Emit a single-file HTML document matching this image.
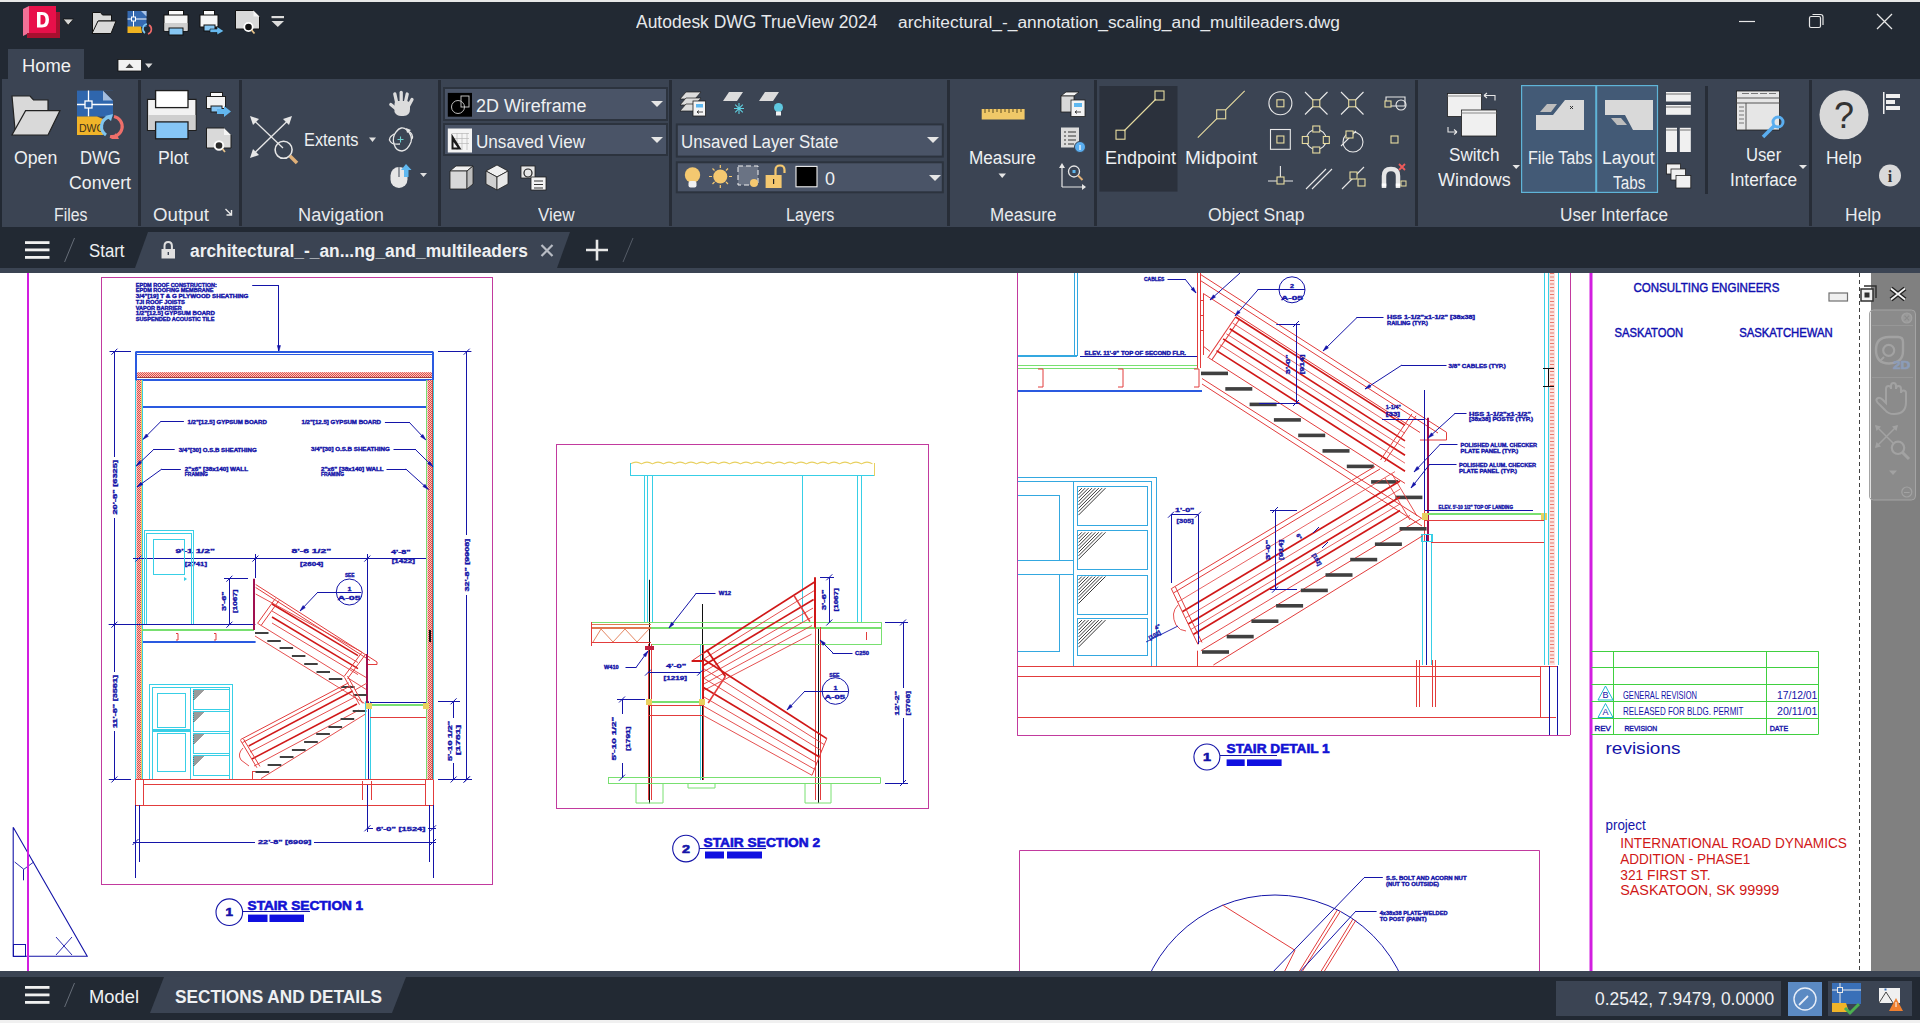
<!DOCTYPE html>
<html><head><meta charset="utf-8">
<style>
*{margin:0;padding:0;box-sizing:border-box}
html,body{width:1920px;height:1023px;overflow:hidden;background:#222933;font-family:"Liberation Sans",sans-serif;color:#eef0f2}
.a{position:absolute}
.t{position:absolute;white-space:nowrap;line-height:1}
.sep{position:absolute;width:3px;background:#272d37}
.lbl{position:absolute;white-space:nowrap;font-size:18px;line-height:1;color:#e8eaed;transform:translateX(-50%)}
svg{position:absolute;overflow:visible}
</style></head><body>
<!-- top white line -->
<div class="a" style="left:0;top:0;width:1920px;height:2px;background:#e8e8e8"></div>

<!-- ===== TITLE BAR ===== -->
<div class="t" style="left:636px;top:14px;font-size:17.5px;color:#e6e8eb;transform:scaleX(0.9984);transform-origin:0 0">Autodesk DWG TrueView 2024</div>
<div class="t" style="left:898px;top:14px;font-size:17.3px;color:#e6e8eb;transform:scaleX(1.0024);transform-origin:0 0">architectural_-_annotation_scaling_and_multileaders.dwg</div>

<!-- ===== RIBBON TAB ROW ===== -->
<div class="a" style="left:8px;top:49px;width:76px;height:31px;background:#3b4453"></div>
<div class="t" style="left:22.4px;top:57px;font-size:18px;color:#f2f2f2;transform:scaleX(1.0205);transform-origin:0 0">Home</div>

<!-- ===== RIBBON PANEL ===== -->
<div class="a" style="left:2px;top:79px;width:1918px;height:148px;background:#3b4453"></div>
<div class="sep" style="left:138px;top:80px;height:146px"></div>
<div class="sep" style="left:239px;top:80px;height:146px"></div>
<div class="sep" style="left:438px;top:80px;height:146px"></div>
<div class="sep" style="left:669px;top:80px;height:146px"></div>
<div class="sep" style="left:947px;top:80px;height:146px"></div>
<div class="sep" style="left:1094px;top:80px;height:146px"></div>
<div class="sep" style="left:1415px;top:80px;height:146px"></div>
<div class="sep" style="left:1705px;top:86px;height:108px"></div>
<div class="sep" style="left:1809px;top:80px;height:146px"></div>

<div class="t" style="left:54px;top:206px;font-size:18px;color:#e8eaed;transform:scaleX(0.8812);transform-origin:0 0">Files</div>
<div class="t" style="left:153.3px;top:206px;font-size:18px;color:#e8eaed;transform:scaleX(1.0361);transform-origin:0 0">Output</div>
<div class="t" style="left:298px;top:206px;font-size:18px;color:#e8eaed;transform:scaleX(1.0110);transform-origin:0 0">Navigation</div>
<div class="t" style="left:538.2px;top:206px;font-size:18px;color:#e8eaed;transform:scaleX(0.9482);transform-origin:0 0">View</div>
<div class="t" style="left:786px;top:206px;font-size:18px;color:#e8eaed;transform:scaleX(0.8958);transform-origin:0 0">Layers</div>
<div class="t" style="left:989.5px;top:206px;font-size:18px;color:#e8eaed;transform:scaleX(0.9481);transform-origin:0 0">Measure</div>
<div class="t" style="left:1208px;top:206px;font-size:18px;color:#e8eaed;transform:scaleX(0.9751);transform-origin:0 0">Object Snap</div>
<div class="t" style="left:1560px;top:206px;font-size:18px;color:#e8eaed;transform:scaleX(0.9554);transform-origin:0 0">User Interface</div>
<div class="t" style="left:1844.5px;top:206px;font-size:18px;color:#e8eaed;transform:scaleX(0.9722);transform-origin:0 0">Help</div>

<!-- ===== FILE TAB BAR ===== -->
<div class="a" style="left:0;top:268px;width:1920px;height:5px;background:#3b4453"></div>
<svg style="left:0;top:0" width="1920" height="1023">
  <polygon points="135,268 148,232 570,232 557,268" fill="#3b4453"/>
  <polygon points="150,1013 164,977 406,977 392,1013" fill="#3b4453"/>
</svg>
<div class="t" style="left:88.5px;top:242px;font-size:18px;transform:scaleX(0.9338);transform-origin:0 0">Start</div>
<div class="t" style="left:190px;top:242px;font-size:18px;font-weight:bold;transform:scaleX(0.9654);transform-origin:0 0">architectural_-_an...ng_and_multileaders</div>

<!-- ===== DRAWING AREA ===== -->
<svg style="left:0;top:273px;overflow:hidden" width="1920" height="698" viewBox="0 273 1920 698">
<rect x="0" y="273" width="1920" height="698" fill="#ffffff"/>
<defs><pattern id="chk" x="0" y="0" width="2" height="2" patternUnits="userSpaceOnUse"><rect width="2" height="2" fill="#f6c8c0"/><rect width="1" height="1" fill="#e24a44"/><rect x="1" y="1" width="1" height="1" fill="#e24a44"/></pattern></defs>
<rect x="101.5" y="277.5" width="391.0" height="607.0" stroke="#c23a9e" stroke-width="1" fill="none"/>
<text x="135.8" y="286.6" font-family="Liberation Sans" font-size="5.0" font-weight="bold" fill="#1414a8" text-anchor="start" letter-spacing="0" textLength="81.0" lengthAdjust="spacingAndGlyphs" stroke="#1414a8" stroke-width="0.35">EPDM ROOF CONSTRUCTION:</text>
<text x="135.8" y="292.4" font-family="Liberation Sans" font-size="5.0" font-weight="bold" fill="#1414a8" text-anchor="start" letter-spacing="0" textLength="77.6" lengthAdjust="spacingAndGlyphs" stroke="#1414a8" stroke-width="0.35">EPDM ROOFING MEMBRANE</text>
<text x="135.8" y="298.1" font-family="Liberation Sans" font-size="5.0" font-weight="bold" fill="#1414a8" text-anchor="start" letter-spacing="0" textLength="112.5" lengthAdjust="spacingAndGlyphs" stroke="#1414a8" stroke-width="0.35">3/4"[19] T &amp; G PLYWOOD SHEATHING</text>
<text x="135.8" y="303.9" font-family="Liberation Sans" font-size="5.0" font-weight="bold" fill="#1414a8" text-anchor="start" letter-spacing="0" textLength="49.0" lengthAdjust="spacingAndGlyphs" stroke="#1414a8" stroke-width="0.35">TJI ROOF JOISTS</text>
<text x="135.8" y="309.6" font-family="Liberation Sans" font-size="5.0" font-weight="bold" fill="#1414a8" text-anchor="start" letter-spacing="0" textLength="46.0" lengthAdjust="spacingAndGlyphs" stroke="#1414a8" stroke-width="0.35">VAPOR BARRIER</text>
<text x="135.8" y="315.4" font-family="Liberation Sans" font-size="5.0" font-weight="bold" fill="#1414a8" text-anchor="start" letter-spacing="0" textLength="79.0" lengthAdjust="spacingAndGlyphs" stroke="#1414a8" stroke-width="0.35">1/2"[12.5] GYPSUM BOARD</text>
<text x="135.8" y="321.1" font-family="Liberation Sans" font-size="5.0" font-weight="bold" fill="#1414a8" text-anchor="start" letter-spacing="0" textLength="78.6" lengthAdjust="spacingAndGlyphs" stroke="#1414a8" stroke-width="0.35">SUSPENDED ACOUSTIC TILE</text>
<line x1="252.2" y1="285.5" x2="278.9" y2="285.5" stroke="#1414a8" stroke-width="1"/>
<line x1="278.5" y1="285.2" x2="278.5" y2="352.0" stroke="#1414a8" stroke-width="1"/>
<polygon points="278.9,351.5 277.3,345.5 280.5,345.5" stroke="#1414a8" stroke-width="0.5" fill="#1414a8"/>
<line x1="135.6" y1="352.0" x2="433.1" y2="352.0" stroke="#2a5ae0" stroke-width="2"/>
<line x1="135.6" y1="354.5" x2="433.1" y2="354.5" stroke="#2a5ae0" stroke-width="1"/>
<line x1="136.0" y1="351.7" x2="136.0" y2="380.2" stroke="#2a5ae0" stroke-width="2"/>
<line x1="433.0" y1="351.7" x2="433.0" y2="380.2" stroke="#2a5ae0" stroke-width="2"/>
<rect x="137.0" y="372.2" width="295.0" height="5.6" fill="url(#chk)"/>
<line x1="137.0" y1="377.5" x2="432.0" y2="377.5" stroke="#a04040" stroke-width="1"/>
<line x1="135.6" y1="380.0" x2="433.1" y2="380.0" stroke="#2a5ae0" stroke-width="2"/>
<line x1="142.3" y1="407.0" x2="426.2" y2="407.0" stroke="#2a5ae0" stroke-width="2"/>
<line x1="135.5" y1="380.0" x2="135.5" y2="779.5" stroke="#38cfe6" stroke-width="1"/>
<rect x="136.5" y="380.0" width="4.5" height="399.5" fill="url(#chk)"/>
<line x1="141.5" y1="380.0" x2="141.5" y2="779.5" stroke="#c04848" stroke-width="1"/>
<line x1="141.5" y1="380.0" x2="141.5" y2="779.5" stroke="#e8d060" stroke-width="1"/>
<line x1="142.5" y1="380.0" x2="142.5" y2="779.5" stroke="#38cfe6" stroke-width="1"/>
<line x1="426.5" y1="380.0" x2="426.5" y2="779.5" stroke="#78e070" stroke-width="1"/>
<rect x="427.5" y="380.0" width="4.7" height="399.5" fill="url(#chk)"/>
<line x1="432.5" y1="380.0" x2="432.5" y2="779.5" stroke="#c04848" stroke-width="1"/>
<line x1="433.5" y1="380.0" x2="433.5" y2="779.5" stroke="#38cfe6" stroke-width="1"/>
<line x1="183.4" y1="421.5" x2="160.8" y2="421.5" stroke="#1414a8" stroke-width="1" stroke-linecap="square"/>
<line x1="160.8" y1="421.5" x2="143.0" y2="439.4" stroke="#1414a8" stroke-width="1.0"/>
<polygon points="143.0,439.4 146.1,434.0 148.4,436.3" stroke="#1414a8" stroke-width="0.5" fill="#1414a8"/>
<text x="187.5" y="423.8" font-family="Liberation Sans" font-size="5.0" font-weight="bold" fill="#1414a8" text-anchor="start" letter-spacing="0" textLength="79.3" lengthAdjust="spacingAndGlyphs" stroke="#1414a8" stroke-width="0.35">1/2"[12.5] GYPSUM BOARD</text>
<line x1="174.2" y1="449.5" x2="153.6" y2="449.5" stroke="#1414a8" stroke-width="1" stroke-linecap="square"/>
<line x1="153.6" y1="449.6" x2="136.2" y2="466.0" stroke="#1414a8" stroke-width="1.0"/>
<polygon points="136.2,466.0 139.5,460.7 141.7,463.0" stroke="#1414a8" stroke-width="0.5" fill="#1414a8"/>
<text x="178.7" y="451.8" font-family="Liberation Sans" font-size="5.0" font-weight="bold" fill="#1414a8" text-anchor="start" letter-spacing="0" textLength="78.0" lengthAdjust="spacingAndGlyphs" stroke="#1414a8" stroke-width="0.35">3/4"[30] O.S.B SHEATHING</text>
<line x1="180.3" y1="469.5" x2="161.9" y2="469.5" stroke="#1414a8" stroke-width="1" stroke-linecap="square"/>
<line x1="161.9" y1="469.0" x2="137.0" y2="487.0" stroke="#1414a8" stroke-width="1.0"/>
<polygon points="137.0,487.0 140.9,482.2 142.8,484.8" stroke="#1414a8" stroke-width="0.5" fill="#1414a8"/>
<text x="184.8" y="470.5" font-family="Liberation Sans" font-size="5.0" font-weight="bold" fill="#1414a8" text-anchor="start" letter-spacing="0" textLength="63.2" lengthAdjust="spacingAndGlyphs" stroke="#1414a8" stroke-width="0.35">2"x6" [38x140] WALL</text>
<text x="184.8" y="476.1" font-family="Liberation Sans" font-size="5.0" font-weight="bold" fill="#1414a8" text-anchor="start" letter-spacing="0" textLength="23.2" lengthAdjust="spacingAndGlyphs" stroke="#1414a8" stroke-width="0.35">FRAMING</text>
<line x1="385.4" y1="422.5" x2="409.0" y2="422.5" stroke="#1414a8" stroke-width="1" stroke-linecap="square"/>
<line x1="409.0" y1="422.0" x2="425.8" y2="439.9" stroke="#1414a8" stroke-width="1.0"/>
<polygon points="425.8,439.9 420.5,436.6 422.9,434.4" stroke="#1414a8" stroke-width="0.5" fill="#1414a8"/>
<text x="301.5" y="423.8" font-family="Liberation Sans" font-size="5.0" font-weight="bold" fill="#1414a8" text-anchor="start" letter-spacing="0" textLength="79.5" lengthAdjust="spacingAndGlyphs" stroke="#1414a8" stroke-width="0.35">1/2"[12.5] GYPSUM BOARD</text>
<line x1="394.0" y1="449.5" x2="415.5" y2="449.5" stroke="#1414a8" stroke-width="1" stroke-linecap="square"/>
<line x1="415.5" y1="449.6" x2="433.0" y2="466.8" stroke="#1414a8" stroke-width="1.0"/>
<polygon points="433.0,466.8 427.6,463.7 429.8,461.5" stroke="#1414a8" stroke-width="0.5" fill="#1414a8"/>
<text x="311.0" y="451.4" font-family="Liberation Sans" font-size="5.0" font-weight="bold" fill="#1414a8" text-anchor="start" letter-spacing="0" textLength="78.7" lengthAdjust="spacingAndGlyphs" stroke="#1414a8" stroke-width="0.35">3/4"[30] O.S.B SHEATHING</text>
<line x1="387.0" y1="469.5" x2="405.8" y2="469.5" stroke="#1414a8" stroke-width="1" stroke-linecap="square"/>
<line x1="405.8" y1="469.0" x2="428.4" y2="489.4" stroke="#1414a8" stroke-width="1.0"/>
<polygon points="428.4,489.4 422.9,486.6 425.0,484.2" stroke="#1414a8" stroke-width="0.5" fill="#1414a8"/>
<text x="320.9" y="470.7" font-family="Liberation Sans" font-size="5.0" font-weight="bold" fill="#1414a8" text-anchor="start" letter-spacing="0" textLength="62.8" lengthAdjust="spacingAndGlyphs" stroke="#1414a8" stroke-width="0.35">2"x6" [38x140] WALL</text>
<text x="320.9" y="476.3" font-family="Liberation Sans" font-size="5.0" font-weight="bold" fill="#1414a8" text-anchor="start" letter-spacing="0" textLength="23.1" lengthAdjust="spacingAndGlyphs" stroke="#1414a8" stroke-width="0.35">FRAMING</text>
<line x1="114.5" y1="351.7" x2="114.5" y2="779.5" stroke="#1414a8" stroke-width="1"/>
<line x1="109.5" y1="351.5" x2="131.0" y2="351.5" stroke="#1414a8" stroke-width="1"/>
<line x1="111.4" y1="354.7" x2="117.4" y2="348.7" stroke="#1414a8" stroke-width="1.0"/>
<line x1="108.8" y1="624.5" x2="131.0" y2="624.5" stroke="#1414a8" stroke-width="1"/>
<line x1="111.4" y1="627.7" x2="117.4" y2="621.7" stroke="#1414a8" stroke-width="1.0"/>
<line x1="108.8" y1="779.5" x2="131.0" y2="779.5" stroke="#1414a8" stroke-width="1"/>
<line x1="111.4" y1="782.5" x2="117.4" y2="776.5" stroke="#1414a8" stroke-width="1.0"/>
<rect x="110.0" y="457.0" width="9.0" height="61.0" fill="#ffffff"/>
<text x="116.8" y="514.6" font-family="Liberation Sans" font-size="6.0" font-weight="bold" fill="#1414a8" text-anchor="start" letter-spacing="0" textLength="54.6" lengthAdjust="spacingAndGlyphs" transform="rotate(-90 116.8 514.6)" stroke="#1414a8" stroke-width="0.35">20'-8" [6325]</text>
<rect x="110.0" y="672.0" width="9.0" height="59.0" fill="#ffffff"/>
<text x="116.9" y="728.0" font-family="Liberation Sans" font-size="6.0" font-weight="bold" fill="#1414a8" text-anchor="start" letter-spacing="0" textLength="53.0" lengthAdjust="spacingAndGlyphs" transform="rotate(-90 116.9 728.0)" stroke="#1414a8" stroke-width="0.35">11'-8" [3581]</text>
<line x1="466.5" y1="351.7" x2="466.5" y2="779.5" stroke="#1414a8" stroke-width="1"/>
<line x1="438.0" y1="351.5" x2="471.4" y2="351.5" stroke="#1414a8" stroke-width="1"/>
<line x1="463.7" y1="354.7" x2="469.7" y2="348.7" stroke="#1414a8" stroke-width="1.0"/>
<line x1="463.7" y1="782.5" x2="469.7" y2="776.5" stroke="#1414a8" stroke-width="1.0"/>
<rect x="462.0" y="535.0" width="10.0" height="60.0" fill="#ffffff"/>
<text x="469.2" y="591.6" font-family="Liberation Sans" font-size="6.0" font-weight="bold" fill="#1414a8" text-anchor="start" letter-spacing="0" textLength="53.0" lengthAdjust="spacingAndGlyphs" transform="rotate(-90 469.2 591.6)" stroke="#1414a8" stroke-width="0.35">32'-8" [9908]</text>
<line x1="453.5" y1="701.3" x2="453.5" y2="779.5" stroke="#1414a8" stroke-width="1"/>
<line x1="438.0" y1="701.5" x2="460.0" y2="701.5" stroke="#1414a8" stroke-width="1"/>
<line x1="438.0" y1="779.5" x2="472.0" y2="779.5" stroke="#1414a8" stroke-width="1"/>
<line x1="450.6" y1="704.3" x2="456.6" y2="698.3" stroke="#1414a8" stroke-width="1.0"/>
<line x1="450.6" y1="782.5" x2="456.6" y2="776.5" stroke="#1414a8" stroke-width="1.0"/>
<line x1="463.7" y1="782.5" x2="469.7" y2="776.5" stroke="#1414a8" stroke-width="1.0"/>
<rect x="446.0" y="718.0" width="15.0" height="45.0" fill="#ffffff"/>
<text x="452.2" y="761.0" font-family="Liberation Sans" font-size="6.0" font-weight="bold" fill="#1414a8" text-anchor="start" letter-spacing="0" textLength="40.2" lengthAdjust="spacingAndGlyphs" transform="rotate(-90 452.2 761.0)" stroke="#1414a8" stroke-width="0.35">5'-10 1/2"</text>
<text x="460.0" y="755.0" font-family="Liberation Sans" font-size="6.0" font-weight="bold" fill="#1414a8" text-anchor="start" letter-spacing="0" textLength="30.0" lengthAdjust="spacingAndGlyphs" transform="rotate(-90 460.0 755.0)" stroke="#1414a8" stroke-width="0.35">[1781]</text>
<line x1="133.0" y1="558.5" x2="426.0" y2="558.5" stroke="#1414a8" stroke-width="1"/>
<line x1="135.5" y1="561.6" x2="141.5" y2="555.6" stroke="#1414a8" stroke-width="1.0"/>
<line x1="252.4" y1="561.6" x2="258.4" y2="555.6" stroke="#1414a8" stroke-width="1.0"/>
<line x1="364.3" y1="561.6" x2="370.3" y2="555.6" stroke="#1414a8" stroke-width="1.0"/>
<line x1="255.5" y1="554.0" x2="255.5" y2="578.0" stroke="#1414a8" stroke-width="1"/>
<line x1="367.5" y1="554.0" x2="367.5" y2="701.0" stroke="#1414a8" stroke-width="1"/>
<text x="175.5" y="553.4" font-family="Liberation Sans" font-size="6.2" font-weight="bold" fill="#1414a8" text-anchor="start" letter-spacing="0" textLength="39.3" lengthAdjust="spacingAndGlyphs" stroke="#1414a8" stroke-width="0.35">9'-1 1/2"</text>
<text x="184.7" y="565.7" font-family="Liberation Sans" font-size="6.2" font-weight="bold" fill="#1414a8" text-anchor="start" letter-spacing="0" textLength="22.3" lengthAdjust="spacingAndGlyphs" stroke="#1414a8" stroke-width="0.35">[2741]</text>
<text x="291.5" y="553.4" font-family="Liberation Sans" font-size="6.2" font-weight="bold" fill="#1414a8" text-anchor="start" letter-spacing="0" textLength="39.7" lengthAdjust="spacingAndGlyphs" stroke="#1414a8" stroke-width="0.35">8'-6 1/2"</text>
<text x="300.0" y="565.7" font-family="Liberation Sans" font-size="6.2" font-weight="bold" fill="#1414a8" text-anchor="start" letter-spacing="0" textLength="23.3" lengthAdjust="spacingAndGlyphs" stroke="#1414a8" stroke-width="0.35">[2604]</text>
<text x="391.0" y="554.2" font-family="Liberation Sans" font-size="6.2" font-weight="bold" fill="#1414a8" text-anchor="start" letter-spacing="0" textLength="19.5" lengthAdjust="spacingAndGlyphs" stroke="#1414a8" stroke-width="0.35">4'-8"</text>
<text x="391.7" y="563.0" font-family="Liberation Sans" font-size="6.2" font-weight="bold" fill="#1414a8" text-anchor="start" letter-spacing="0" textLength="23.3" lengthAdjust="spacingAndGlyphs" stroke="#1414a8" stroke-width="0.35">[1422]</text>
<line x1="229.5" y1="578.7" x2="229.5" y2="624.7" stroke="#1414a8" stroke-width="1"/>
<line x1="224.0" y1="578.5" x2="248.0" y2="578.5" stroke="#1414a8" stroke-width="1"/>
<line x1="226.4" y1="581.7" x2="232.4" y2="575.7" stroke="#1414a8" stroke-width="1.0"/>
<line x1="226.4" y1="627.7" x2="232.4" y2="621.7" stroke="#1414a8" stroke-width="1.0"/>
<text x="225.8" y="611.0" font-family="Liberation Sans" font-size="6.0" font-weight="bold" fill="#1414a8" text-anchor="start" letter-spacing="0" textLength="19.6" lengthAdjust="spacingAndGlyphs" transform="rotate(-90 225.8 611.0)" stroke="#1414a8" stroke-width="0.35">3'-6"</text>
<text x="237.1" y="613.0" font-family="Liberation Sans" font-size="6.0" font-weight="bold" fill="#1414a8" text-anchor="start" letter-spacing="0" textLength="23.5" lengthAdjust="spacingAndGlyphs" transform="rotate(-90 237.1 613.0)" stroke="#1414a8" stroke-width="0.35">[1067]</text>
<rect x="144.5" y="530.5" width="49.0" height="94.0" stroke="#38cfe6" stroke-width="1" fill="none"/>
<rect x="146.5" y="533.5" width="45.0" height="91.0" stroke="#38cfe6" stroke-width="1" fill="none"/>
<rect x="153.5" y="539.5" width="31.0" height="35.0" stroke="#38cfe6" stroke-width="1" fill="none"/>
<polygon points="184,577 187,579 184,581" fill="#38cfe6"/>
<line x1="108.8" y1="624.5" x2="255.4" y2="624.5" stroke="#1414a8" stroke-width="1"/>
<line x1="142.0" y1="630.0" x2="254.0" y2="630.0" stroke="#78e070" stroke-width="2"/>
<line x1="143.0" y1="642.0" x2="255.6" y2="642.0" stroke="#2a5ae0" stroke-width="2"/>
<polyline points="176.0,633.5 178.0,633.5 178.0,640.0 176.0,640.0" stroke="#e23c3c" stroke-width="1.0" fill="none"/>
<polyline points="214.0,633.5 216.0,633.5 216.0,640.0 214.0,640.0" stroke="#e23c3c" stroke-width="1.0" fill="none"/>
<line x1="254.0" y1="578.7" x2="254.0" y2="630.0" stroke="#a01050" stroke-width="2"/>
<line x1="255.7" y1="584.5" x2="377.0" y2="662.0" stroke="#e23c3c" stroke-width="1.0"/>
<line x1="255.7" y1="587.5" x2="370.0" y2="660.5" stroke="#e23c3c" stroke-width="1.0"/>
<polyline points="377.0,662.0 377.0,664.5 366.9,664.5" stroke="#e23c3c" stroke-width="1.0" fill="none"/>
<line x1="255.7" y1="594.0" x2="361.8" y2="652.0" stroke="#e23c3c" stroke-width="0.9"/>
<line x1="272.0" y1="604.0" x2="358.0" y2="655.6" stroke="#d01818" stroke-width="1.5"/>
<line x1="272.0" y1="611.0" x2="358.0" y2="662.6" stroke="#e23c3c" stroke-width="0.9"/>
<line x1="272.0" y1="617.0" x2="358.0" y2="668.6" stroke="#d01818" stroke-width="1.5"/>
<line x1="272.0" y1="623.0" x2="358.0" y2="674.6" stroke="#e23c3c" stroke-width="0.9"/>
<line x1="275.4" y1="598.5" x2="257.6" y2="623.3" stroke="#e23c3c" stroke-width="1.0"/>
<line x1="279.0" y1="600.5" x2="261.2" y2="625.3" stroke="#e23c3c" stroke-width="1.0"/>
<line x1="361.8" y1="652.5" x2="344.0" y2="676.6" stroke="#e23c3c" stroke-width="1.0"/>
<line x1="365.4" y1="654.5" x2="347.6" y2="678.6" stroke="#e23c3c" stroke-width="1.0"/>
<line x1="257.6" y1="623.3" x2="344.0" y2="676.6" stroke="#e23c3c" stroke-width="0.9"/>
<line x1="255.0" y1="636.0" x2="364.4" y2="703.3" stroke="#e23c3c" stroke-width="0.9"/>
<line x1="348.0" y1="678.0" x2="367.0" y2="690.0" stroke="#e23c3c" stroke-width="0.9"/>
<line x1="350.0" y1="668.0" x2="367.0" y2="678.0" stroke="#e23c3c" stroke-width="0.9"/>
<line x1="367.0" y1="654.0" x2="367.0" y2="705.0" stroke="#a01050" stroke-width="2"/>
<line x1="255.0" y1="633.0" x2="268.5" y2="633.0" stroke="#404040" stroke-width="2"/>
<line x1="267.3" y1="641.0" x2="280.8" y2="641.0" stroke="#404040" stroke-width="2"/>
<line x1="279.6" y1="648.0" x2="293.1" y2="648.0" stroke="#404040" stroke-width="2"/>
<line x1="291.9" y1="656.0" x2="305.4" y2="656.0" stroke="#404040" stroke-width="2"/>
<line x1="304.2" y1="664.0" x2="317.7" y2="664.0" stroke="#404040" stroke-width="2"/>
<line x1="316.5" y1="672.0" x2="330.0" y2="672.0" stroke="#404040" stroke-width="2"/>
<line x1="328.8" y1="679.0" x2="342.3" y2="679.0" stroke="#404040" stroke-width="2"/>
<line x1="341.1" y1="687.0" x2="354.6" y2="687.0" stroke="#404040" stroke-width="2"/>
<line x1="353.4" y1="695.0" x2="366.9" y2="695.0" stroke="#404040" stroke-width="2"/>
<line x1="240.5" y1="739.6" x2="348.6" y2="682.8" stroke="#e23c3c" stroke-width="1.0"/>
<line x1="242.5" y1="742.6" x2="350.6" y2="685.8" stroke="#e23c3c" stroke-width="1.0"/>
<line x1="248.7" y1="746.0" x2="352.7" y2="691.0" stroke="#d01818" stroke-width="1.5"/>
<line x1="250.0" y1="752.0" x2="355.0" y2="697.0" stroke="#e23c3c" stroke-width="0.9"/>
<line x1="252.0" y1="759.0" x2="357.0" y2="704.0" stroke="#d01818" stroke-width="1.5"/>
<line x1="254.0" y1="766.0" x2="359.0" y2="710.0" stroke="#e23c3c" stroke-width="0.9"/>
<line x1="261.0" y1="778.6" x2="365.0" y2="714.3" stroke="#e23c3c" stroke-width="0.9"/>
<line x1="240.5" y1="740.3" x2="256.9" y2="767.7" stroke="#e23c3c" stroke-width="1.0"/>
<line x1="243.5" y1="739.0" x2="259.9" y2="766.4" stroke="#e23c3c" stroke-width="1.0"/>
<path d="M243,748 q-6,6 -2,12 l8,6" stroke="#e23c3c" fill="none" stroke-width="0.9"/>
<line x1="344.5" y1="677.4" x2="359.5" y2="704.7" stroke="#e23c3c" stroke-width="1.0"/>
<line x1="347.5" y1="676.0" x2="362.5" y2="703.3" stroke="#e23c3c" stroke-width="1.0"/>
<line x1="252.5" y1="771.0" x2="252.5" y2="779.0" stroke="#e23c3c" stroke-width="1"/>
<line x1="252.0" y1="771.5" x2="259.0" y2="771.5" stroke="#e23c3c" stroke-width="1"/>
<line x1="355.0" y1="690.0" x2="367.0" y2="683.0" stroke="#e23c3c" stroke-width="0.9"/>
<line x1="255.5" y1="772.0" x2="269.2" y2="772.0" stroke="#404040" stroke-width="2"/>
<line x1="267.6" y1="765.0" x2="281.3" y2="765.0" stroke="#404040" stroke-width="2"/>
<line x1="279.8" y1="757.0" x2="293.5" y2="757.0" stroke="#404040" stroke-width="2"/>
<line x1="291.9" y1="750.0" x2="305.6" y2="750.0" stroke="#404040" stroke-width="2"/>
<line x1="304.1" y1="742.0" x2="317.8" y2="742.0" stroke="#404040" stroke-width="2"/>
<line x1="316.2" y1="734.0" x2="329.9" y2="734.0" stroke="#404040" stroke-width="2"/>
<line x1="328.4" y1="727.0" x2="342.1" y2="727.0" stroke="#404040" stroke-width="2"/>
<line x1="340.6" y1="719.0" x2="354.2" y2="719.0" stroke="#404040" stroke-width="2"/>
<line x1="352.7" y1="711.0" x2="366.4" y2="711.0" stroke="#404040" stroke-width="2"/>
<circle cx="349.3" cy="592.0" r="13.0" stroke="#1414a8" stroke-width="1.0" fill="none"/>
<line x1="337.3" y1="592.5" x2="361.3" y2="592.5" stroke="#1414a8" stroke-width="1"/>
<text x="347.5" y="591.1" font-family="Liberation Sans" font-size="6.2" font-weight="bold" fill="#1414a8" text-anchor="start" letter-spacing="0" textLength="4.0" lengthAdjust="spacingAndGlyphs" stroke="#1414a8" stroke-width="0.35">1</text>
<text x="337.5" y="600.4" font-family="Liberation Sans" font-size="6.2" font-weight="bold" fill="#1414a8" text-anchor="start" letter-spacing="0" textLength="23.2" lengthAdjust="spacingAndGlyphs" stroke="#1414a8" stroke-width="0.35">A-05</text>
<text x="344.9" y="576.8" font-family="Liberation Sans" font-size="5.0" font-weight="bold" fill="#1414a8" text-anchor="start" letter-spacing="0" textLength="9.7" lengthAdjust="spacingAndGlyphs" stroke="#1414a8" stroke-width="0.35">SEE</text>
<line x1="337.3" y1="592.5" x2="318.0" y2="592.5" stroke="#1414a8" stroke-width="1" stroke-linecap="square"/>
<line x1="318.0" y1="592.0" x2="300.0" y2="611.0" stroke="#1414a8" stroke-width="1.0"/>
<polygon points="300.0,611.0 303.0,605.5 305.3,607.7" stroke="#1414a8" stroke-width="0.5" fill="#1414a8"/>
<line x1="365.5" y1="701.3" x2="365.5" y2="779.5" stroke="#38cfe6" stroke-width="1"/>
<line x1="370.5" y1="701.3" x2="370.5" y2="779.5" stroke="#38cfe6" stroke-width="1"/>
<line x1="368.5" y1="701.3" x2="368.5" y2="779.5" stroke="#1414a8" stroke-width="1"/>
<line x1="370.0" y1="705.0" x2="426.0" y2="705.0" stroke="#78e070" stroke-width="2"/>
<line x1="370.0" y1="702.5" x2="426.0" y2="702.5" stroke="#1414a8" stroke-width="1"/>
<line x1="370.0" y1="717.5" x2="426.0" y2="717.5" stroke="#e23c3c" stroke-width="1"/>
<rect x="366.0" y="703.0" width="6.0" height="6.0" fill="#e8d060"/>
<rect x="423.0" y="703.0" width="6.0" height="6.0" fill="#e8d060"/>
<line x1="430.0" y1="630.0" x2="430.0" y2="642.0" stroke="#101010" stroke-width="2"/>
<rect x="149.5" y="684.5" width="83.0" height="95.0" stroke="#38cfe6" stroke-width="1" fill="none"/>
<rect x="152.5" y="687.5" width="77.0" height="92.0" stroke="#38cfe6" stroke-width="1" fill="none"/>
<line x1="190.5" y1="687.0" x2="190.5" y2="779.0" stroke="#38cfe6" stroke-width="1"/>
<line x1="152.5" y1="730.5" x2="190.0" y2="730.5" stroke="#38cfe6" stroke-width="3.0"/>
<rect x="157.5" y="693.5" width="28.0" height="34.0" stroke="#38cfe6" stroke-width="1" fill="none"/>
<rect x="157.5" y="733.5" width="28.0" height="38.0" stroke="#38cfe6" stroke-width="1" fill="none"/>
<rect x="193.5" y="689.5" width="36.0" height="20.0" stroke="#38cfe6" stroke-width="1" fill="none"/>
<line x1="193.5" y1="692.0" x2="195.5" y2="690.0" stroke="#202020" stroke-width="0.9"/>
<line x1="193.5" y1="694.0" x2="197.5" y2="690.0" stroke="#202020" stroke-width="0.9"/>
<line x1="193.5" y1="696.0" x2="199.5" y2="690.0" stroke="#202020" stroke-width="0.9"/>
<line x1="193.5" y1="698.0" x2="201.5" y2="690.0" stroke="#202020" stroke-width="0.9"/>
<line x1="193.5" y1="700.0" x2="203.5" y2="690.0" stroke="#202020" stroke-width="0.9"/>
<rect x="193.5" y="711.5" width="36.0" height="20.0" stroke="#38cfe6" stroke-width="1" fill="none"/>
<line x1="193.5" y1="714.0" x2="195.5" y2="712.0" stroke="#202020" stroke-width="0.9"/>
<line x1="193.5" y1="716.0" x2="197.5" y2="712.0" stroke="#202020" stroke-width="0.9"/>
<line x1="193.5" y1="718.0" x2="199.5" y2="712.0" stroke="#202020" stroke-width="0.9"/>
<line x1="193.5" y1="720.0" x2="201.5" y2="712.0" stroke="#202020" stroke-width="0.9"/>
<line x1="193.5" y1="722.0" x2="203.5" y2="712.0" stroke="#202020" stroke-width="0.9"/>
<rect x="193.5" y="733.5" width="36.0" height="20.0" stroke="#38cfe6" stroke-width="1" fill="none"/>
<line x1="193.5" y1="736.0" x2="195.5" y2="734.0" stroke="#202020" stroke-width="0.9"/>
<line x1="193.5" y1="738.0" x2="197.5" y2="734.0" stroke="#202020" stroke-width="0.9"/>
<line x1="193.5" y1="740.0" x2="199.5" y2="734.0" stroke="#202020" stroke-width="0.9"/>
<line x1="193.5" y1="742.0" x2="201.5" y2="734.0" stroke="#202020" stroke-width="0.9"/>
<line x1="193.5" y1="744.0" x2="203.5" y2="734.0" stroke="#202020" stroke-width="0.9"/>
<rect x="193.5" y="755.5" width="36.0" height="20.0" stroke="#38cfe6" stroke-width="1" fill="none"/>
<line x1="193.5" y1="758.0" x2="195.5" y2="756.0" stroke="#202020" stroke-width="0.9"/>
<line x1="193.5" y1="760.0" x2="197.5" y2="756.0" stroke="#202020" stroke-width="0.9"/>
<line x1="193.5" y1="762.0" x2="199.5" y2="756.0" stroke="#202020" stroke-width="0.9"/>
<line x1="193.5" y1="764.0" x2="201.5" y2="756.0" stroke="#202020" stroke-width="0.9"/>
<line x1="193.5" y1="766.0" x2="203.5" y2="756.0" stroke="#202020" stroke-width="0.9"/>
<line x1="135.5" y1="779.5" x2="433.0" y2="779.5" stroke="#e23c3c" stroke-width="1"/>
<line x1="143.0" y1="784.5" x2="425.0" y2="784.5" stroke="#e23c3c" stroke-width="1"/>
<line x1="135.5" y1="805.5" x2="433.0" y2="805.5" stroke="#e23c3c" stroke-width="1"/>
<line x1="135.5" y1="779.5" x2="135.5" y2="805.0" stroke="#e23c3c" stroke-width="1"/>
<line x1="143.5" y1="779.5" x2="143.5" y2="805.0" stroke="#e23c3c" stroke-width="1"/>
<line x1="425.5" y1="779.5" x2="425.5" y2="805.0" stroke="#e23c3c" stroke-width="1"/>
<line x1="433.5" y1="779.5" x2="433.5" y2="805.0" stroke="#e23c3c" stroke-width="1"/>
<line x1="362.5" y1="781.0" x2="362.5" y2="800.0" stroke="#e23c3c" stroke-width="1"/>
<line x1="371.5" y1="781.0" x2="371.5" y2="800.0" stroke="#e23c3c" stroke-width="1"/>
<line x1="135.5" y1="805.0" x2="135.5" y2="878.0" stroke="#1414a8" stroke-width="1"/>
<line x1="433.5" y1="805.0" x2="433.5" y2="878.0" stroke="#1414a8" stroke-width="1"/>
<line x1="139.5" y1="805.0" x2="139.5" y2="862.0" stroke="#1414a8" stroke-width="1"/>
<line x1="429.5" y1="805.0" x2="429.5" y2="862.0" stroke="#1414a8" stroke-width="1"/>
<line x1="367.5" y1="785.0" x2="367.5" y2="832.0" stroke="#1414a8" stroke-width="1"/>
<line x1="133.0" y1="842.5" x2="436.0" y2="842.5" stroke="#1414a8" stroke-width="1"/>
<line x1="132.5" y1="845.0" x2="138.5" y2="839.0" stroke="#1414a8" stroke-width="1.0"/>
<line x1="430.0" y1="845.0" x2="436.0" y2="839.0" stroke="#1414a8" stroke-width="1.0"/>
<rect x="255.0" y="838.0" width="59.0" height="8.0" fill="#fff"/>
<text x="258.1" y="844.0" font-family="Liberation Sans" font-size="6.2" font-weight="bold" fill="#1414a8" text-anchor="start" letter-spacing="0" textLength="53.1" lengthAdjust="spacingAndGlyphs" stroke="#1414a8" stroke-width="0.35">22'-8" [6909]</text>
<line x1="367.4" y1="828.5" x2="436.0" y2="828.5" stroke="#1414a8" stroke-width="1"/>
<line x1="364.4" y1="831.3" x2="370.4" y2="825.3" stroke="#1414a8" stroke-width="1.0"/>
<line x1="430.0" y1="831.3" x2="436.0" y2="825.3" stroke="#1414a8" stroke-width="1.0"/>
<rect x="373.0" y="824.0" width="55.0" height="8.0" fill="#fff"/>
<text x="375.9" y="830.5" font-family="Liberation Sans" font-size="6.2" font-weight="bold" fill="#1414a8" text-anchor="start" letter-spacing="0" textLength="49.4" lengthAdjust="spacingAndGlyphs" stroke="#1414a8" stroke-width="0.35">6'-0" [1524]</text>
<circle cx="229.3" cy="912.2" r="13.3" stroke="#1414a8" stroke-width="1.1" fill="none"/>
<text x="225.5" y="916.2" font-family="Liberation Sans" font-size="11" font-weight="bold" fill="#1414a8" text-anchor="start" letter-spacing="0" textLength="7.5" lengthAdjust="spacingAndGlyphs" stroke="#1414a8" stroke-width="0.6">1</text>
<text x="247.6" y="909.8" font-family="Liberation Sans" font-size="13" font-weight="bold" fill="#1212d4" text-anchor="start" letter-spacing="0" textLength="115.6" lengthAdjust="spacingAndGlyphs" stroke="#1212d4" stroke-width="0.6">STAIR SECTION 1</text>
<line x1="242.5" y1="911.5" x2="310.0" y2="911.5" stroke="#1414a8" stroke-width="1"/>
<rect x="248.0" y="914.6" width="19.5" height="7.4" fill="#1010e0"/>
<rect x="269.5" y="914.6" width="34.5" height="7.4" fill="#1010e0"/>
<polyline points="13.2,827.2 13.2,956.2 87.2,956.2 13.2,827.2" stroke="#1414a8" stroke-width="1.1" fill="none"/>
<rect x="13.5" y="944.5" width="12.0" height="12.0" stroke="#1414a8" stroke-width="1" fill="none"/>
<line x1="56.0" y1="937.0" x2="72.0" y2="955.0" stroke="#1414a8" stroke-width="0.9"/>
<line x1="72.0" y1="937.0" x2="56.0" y2="955.0" stroke="#1414a8" stroke-width="0.9"/>
<line x1="14.7" y1="862.0" x2="23.8" y2="869.3" stroke="#1414a8" stroke-width="0.9"/>
<line x1="33.7" y1="862.0" x2="23.8" y2="869.3" stroke="#1414a8" stroke-width="0.9"/>
<line x1="23.5" y1="869.3" x2="23.5" y2="880.3" stroke="#1414a8" stroke-width="1"/>
<rect x="556.5" y="444.5" width="372.0" height="364.0" stroke="#c23a9e" stroke-width="1" fill="none"/>
<path d="M630.5,463.9 q5.5,-3.5 11,0 q5.5,-3.5 11,0 q5.5,-3.5 11,0 q5.5,-3.5 11,0 q5.5,-3.5 11,0 q5.5,-3.5 11,0 q5.5,-3.5 11,0 q5.5,-3.5 11,0 q5.5,-3.5 11,0 q5.5,-3.5 11,0 q5.5,-3.5 11,0 q5.5,-3.5 11,0 q5.5,-3.5 11,0 q5.5,-3.5 11,0 q5.5,-3.5 11,0 q5.5,-3.5 11,0 q5.5,-3.5 11,0 q5.5,-3.5 11,0 q5.5,-3.5 11,0 q5.5,-3.5 11,0 q5.5,-3.5 11,0 q5.5,-3.5 11,0" stroke="#e8d060" stroke-width="1.1" fill="none"/>
<line x1="630.5" y1="475.5" x2="874.0" y2="475.5" stroke="#38cfe6" stroke-width="1"/>
<line x1="630.5" y1="463.0" x2="630.5" y2="476.0" stroke="#38cfe6" stroke-width="1"/>
<line x1="874.5" y1="463.0" x2="874.5" y2="476.0" stroke="#e8d060" stroke-width="1"/>
<line x1="644.5" y1="476.0" x2="644.5" y2="623.0" stroke="#38cfe6" stroke-width="1"/>
<line x1="647.5" y1="476.0" x2="647.5" y2="623.0" stroke="#38cfe6" stroke-width="1"/>
<line x1="652.5" y1="476.0" x2="652.5" y2="623.0" stroke="#38cfe6" stroke-width="1"/>
<line x1="802.5" y1="476.0" x2="802.5" y2="623.0" stroke="#38cfe6" stroke-width="1"/>
<line x1="857.5" y1="476.0" x2="857.5" y2="623.0" stroke="#38cfe6" stroke-width="1"/>
<line x1="861.5" y1="476.0" x2="861.5" y2="623.0" stroke="#38cfe6" stroke-width="1"/>
<line x1="649.5" y1="579.8" x2="649.5" y2="803.4" stroke="#101010" stroke-width="1"/>
<line x1="702.5" y1="604.0" x2="702.5" y2="780.0" stroke="#101010" stroke-width="1"/>
<line x1="818.5" y1="627.4" x2="818.5" y2="803.0" stroke="#101010" stroke-width="1"/>
<line x1="591.0" y1="622.5" x2="881.8" y2="622.5" stroke="#78e070" stroke-width="1"/>
<line x1="651.0" y1="628.0" x2="881.8" y2="628.0" stroke="#78e070" stroke-width="2"/>
<line x1="651.0" y1="644.5" x2="881.8" y2="644.5" stroke="#78e070" stroke-width="1"/>
<line x1="881.5" y1="622.5" x2="881.5" y2="644.5" stroke="#78e070" stroke-width="1"/>
<line x1="591.0" y1="624.5" x2="651.0" y2="624.5" stroke="#e07850" stroke-width="1"/>
<line x1="591.0" y1="628.0" x2="651.0" y2="628.0" stroke="#e07850" stroke-width="2"/>
<line x1="591.0" y1="642.5" x2="651.0" y2="642.5" stroke="#e23c3c" stroke-width="1"/>
<polyline points="593.0,642.0 601.0,629.0 613.0,642.0 625.0,629.0 637.0,642.0 649.0,629.0" stroke="#e07850" stroke-width="0.9" fill="none"/>
<line x1="591.5" y1="622.0" x2="591.5" y2="646.0" stroke="#e23c3c" stroke-width="1"/>
<line x1="866.5" y1="632.0" x2="866.5" y2="640.0" stroke="#e23c3c" stroke-width="1"/>
<line x1="648.5" y1="644.0" x2="648.5" y2="800.0" stroke="#e23c3c" stroke-width="1"/>
<line x1="651.5" y1="644.0" x2="651.5" y2="800.0" stroke="#e23c3c" stroke-width="1"/>
<rect x="645.0" y="646.0" width="9.0" height="4.0" fill="#c02040"/>
<line x1="700.5" y1="645.0" x2="700.5" y2="780.0" stroke="#38cfe6" stroke-width="1"/>
<line x1="703.5" y1="645.0" x2="703.5" y2="780.0" stroke="#e23c3c" stroke-width="1"/>
<line x1="815.5" y1="627.0" x2="815.5" y2="800.0" stroke="#e23c3c" stroke-width="1"/>
<line x1="820.5" y1="627.0" x2="820.5" y2="800.0" stroke="#e23c3c" stroke-width="1"/>
<line x1="815.0" y1="577.3" x2="815.0" y2="627.4" stroke="#d01818" stroke-width="2"/>
<line x1="703.5" y1="653.0" x2="814.6" y2="582.0" stroke="#d01818" stroke-width="1.7"/>
<line x1="703.5" y1="659.2" x2="814.1" y2="590.7" stroke="#e23c3c" stroke-width="0.9"/>
<line x1="703.5" y1="665.5" x2="813.6" y2="599.4" stroke="#d01818" stroke-width="1.7"/>
<line x1="703.5" y1="671.8" x2="813.0" y2="608.1" stroke="#e23c3c" stroke-width="0.9"/>
<line x1="703.5" y1="678.0" x2="812.5" y2="616.8" stroke="#e23c3c" stroke-width="0.9"/>
<line x1="703.5" y1="684.2" x2="812.0" y2="625.5" stroke="#e23c3c" stroke-width="0.9"/>
<line x1="703.5" y1="690.5" x2="811.5" y2="634.2" stroke="#e23c3c" stroke-width="0.9"/>
<polyline points="691.7,661.0 703.5,653.0" stroke="#e23c3c" stroke-width="1.0" fill="none"/>
<line x1="691.7" y1="661.0" x2="703.0" y2="661.0" stroke="#d01818" stroke-width="2"/>
<line x1="706.6" y1="649.8" x2="725.4" y2="676.4" stroke="#d01818" stroke-width="1.8"/>
<line x1="794.2" y1="595.8" x2="809.9" y2="621.6" stroke="#e23c3c" stroke-width="1.6"/>
<line x1="703.5" y1="659.2" x2="826.8" y2="738.6" stroke="#d01818" stroke-width="1.7"/>
<line x1="703.5" y1="668.6" x2="824.3" y2="744.7" stroke="#e23c3c" stroke-width="0.9"/>
<line x1="703.5" y1="678.0" x2="821.9" y2="750.8" stroke="#e23c3c" stroke-width="0.9"/>
<line x1="703.5" y1="687.4" x2="819.4" y2="757.0" stroke="#d01818" stroke-width="1.7"/>
<line x1="703.5" y1="696.7" x2="816.9" y2="763.1" stroke="#e23c3c" stroke-width="0.9"/>
<line x1="703.5" y1="706.1" x2="814.5" y2="769.2" stroke="#e23c3c" stroke-width="0.9"/>
<line x1="703.5" y1="715.5" x2="812.0" y2="775.3" stroke="#e23c3c" stroke-width="0.9"/>
<polyline points="826.8,738.6 822.0,750.0 812.0,775.3" stroke="#e23c3c" stroke-width="1.0" fill="none"/>
<line x1="725.4" y1="676.4" x2="708.2" y2="703.0" stroke="#e23c3c" stroke-width="1.6"/>
<line x1="703.0" y1="660.0" x2="703.0" y2="700.0" stroke="#d01818" stroke-width="2"/>
<line x1="648.0" y1="702.0" x2="703.0" y2="702.0" stroke="#78e070" stroke-width="2"/>
<line x1="648.0" y1="705.5" x2="703.0" y2="705.5" stroke="#e23c3c" stroke-width="1"/>
<line x1="648.0" y1="715.5" x2="703.0" y2="715.5" stroke="#e23c3c" stroke-width="1"/>
<rect x="646.0" y="699.0" width="6.0" height="6.0" fill="#e8d060"/>
<rect x="699.0" y="699.0" width="6.0" height="6.0" fill="#e8d060"/>
<line x1="608.0" y1="777.5" x2="880.6" y2="777.5" stroke="#78e070" stroke-width="1"/>
<line x1="608.0" y1="783.5" x2="880.6" y2="783.5" stroke="#78e070" stroke-width="1"/>
<line x1="608.5" y1="777.7" x2="608.5" y2="783.1" stroke="#78e070" stroke-width="1"/>
<line x1="880.5" y1="777.7" x2="880.5" y2="783.1" stroke="#78e070" stroke-width="1"/>
<polyline points="636.0,783.0 636.0,803.0 663.0,803.0 663.0,783.0" stroke="#78e070" stroke-width="1.0" fill="none"/>
<polyline points="688.0,783.0 688.0,788.0 715.0,788.0 715.0,783.0" stroke="#78e070" stroke-width="1.0" fill="none"/>
<polyline points="805.0,783.0 805.0,803.0 831.0,803.0 831.0,783.0" stroke="#78e070" stroke-width="1.0" fill="none"/>
<line x1="648.0" y1="672.5" x2="700.0" y2="672.5" stroke="#1414a8" stroke-width="1"/>
<line x1="645.0" y1="675.6" x2="651.0" y2="669.6" stroke="#1414a8" stroke-width="1.0"/>
<line x1="697.2" y1="675.6" x2="703.2" y2="669.6" stroke="#1414a8" stroke-width="1.0"/>
<text x="666.0" y="668.2" font-family="Liberation Sans" font-size="6.2" font-weight="bold" fill="#1414a8" text-anchor="start" letter-spacing="0" textLength="20.3" lengthAdjust="spacingAndGlyphs" stroke="#1414a8" stroke-width="0.35">4'-0"</text>
<text x="663.6" y="679.7" font-family="Liberation Sans" font-size="6.2" font-weight="bold" fill="#1414a8" text-anchor="start" letter-spacing="0" textLength="23.4" lengthAdjust="spacingAndGlyphs" stroke="#1414a8" stroke-width="0.35">[1219]</text>
<line x1="622.5" y1="699.5" x2="622.5" y2="777.7" stroke="#1414a8" stroke-width="1"/>
<line x1="617.0" y1="699.5" x2="645.0" y2="699.5" stroke="#1414a8" stroke-width="1"/>
<line x1="619.0" y1="702.5" x2="625.0" y2="696.5" stroke="#1414a8" stroke-width="1.0"/>
<line x1="619.0" y1="780.7" x2="625.0" y2="774.7" stroke="#1414a8" stroke-width="1.0"/>
<rect x="608.0" y="714.0" width="25.0" height="49.0" fill="#fff"/>
<text x="616.4" y="760.6" font-family="Liberation Sans" font-size="6.2" font-weight="bold" fill="#1414a8" text-anchor="start" letter-spacing="0" textLength="44.0" lengthAdjust="spacingAndGlyphs" transform="rotate(-90 616.4 760.6)" stroke="#1414a8" stroke-width="0.35">5'-10 1/2"</text>
<text x="629.9" y="750.8" font-family="Liberation Sans" font-size="6.2" font-weight="bold" fill="#1414a8" text-anchor="start" letter-spacing="0" textLength="24.4" lengthAdjust="spacingAndGlyphs" transform="rotate(-90 629.9 750.8)" stroke="#1414a8" stroke-width="0.35">[1791]</text>
<line x1="903.5" y1="622.5" x2="903.5" y2="783.0" stroke="#1414a8" stroke-width="1"/>
<line x1="885.0" y1="622.5" x2="908.0" y2="622.5" stroke="#1414a8" stroke-width="1"/>
<line x1="885.0" y1="783.5" x2="908.0" y2="783.5" stroke="#1414a8" stroke-width="1"/>
<line x1="900.0" y1="625.5" x2="906.0" y2="619.5" stroke="#1414a8" stroke-width="1.0"/>
<line x1="900.0" y1="786.0" x2="906.0" y2="780.0" stroke="#1414a8" stroke-width="1.0"/>
<rect x="890.0" y="688.0" width="24.0" height="30.0" fill="#fff"/>
<text x="898.7" y="715.4" font-family="Liberation Sans" font-size="6.2" font-weight="bold" fill="#1414a8" text-anchor="start" letter-spacing="0" textLength="24.4" lengthAdjust="spacingAndGlyphs" transform="rotate(-90 898.7 715.4)" stroke="#1414a8" stroke-width="0.35">12'-2"</text>
<text x="910.2" y="715.4" font-family="Liberation Sans" font-size="6.2" font-weight="bold" fill="#1414a8" text-anchor="start" letter-spacing="0" textLength="24.4" lengthAdjust="spacingAndGlyphs" transform="rotate(-90 910.2 715.4)" stroke="#1414a8" stroke-width="0.35">[3708]</text>
<line x1="829.5" y1="577.3" x2="829.5" y2="622.5" stroke="#1414a8" stroke-width="1"/>
<line x1="820.0" y1="577.5" x2="834.0" y2="577.5" stroke="#1414a8" stroke-width="1"/>
<line x1="826.3" y1="580.3" x2="832.3" y2="574.3" stroke="#1414a8" stroke-width="1.0"/>
<line x1="826.3" y1="625.5" x2="832.3" y2="619.5" stroke="#1414a8" stroke-width="1.0"/>
<text x="826.1" y="610.3" font-family="Liberation Sans" font-size="6.2" font-weight="bold" fill="#1414a8" text-anchor="start" letter-spacing="0" textLength="20.8" lengthAdjust="spacingAndGlyphs" transform="rotate(-90 826.1 610.3)" stroke="#1414a8" stroke-width="0.35">3'-6"</text>
<text x="837.6" y="611.5" font-family="Liberation Sans" font-size="6.2" font-weight="bold" fill="#1414a8" text-anchor="start" letter-spacing="0" textLength="23.2" lengthAdjust="spacingAndGlyphs" transform="rotate(-90 837.6 611.5)" stroke="#1414a8" stroke-width="0.35">[1067]</text>
<text x="718.8" y="595.1" font-family="Liberation Sans" font-size="5.2" font-weight="bold" fill="#1414a8" text-anchor="start" letter-spacing="0" textLength="12.2" lengthAdjust="spacingAndGlyphs" stroke="#1414a8" stroke-width="0.35">W12</text>
<line x1="715.0" y1="593.5" x2="696.0" y2="593.5" stroke="#1414a8" stroke-width="1" stroke-linecap="square"/>
<line x1="696.0" y1="593.6" x2="669.0" y2="628.0" stroke="#1414a8" stroke-width="1.0"/>
<polygon points="669.0,628.0 671.4,622.3 674.0,624.3" stroke="#1414a8" stroke-width="0.5" fill="#1414a8"/>
<text x="604.0" y="669.2" font-family="Liberation Sans" font-size="5.2" font-weight="bold" fill="#1414a8" text-anchor="start" letter-spacing="0" textLength="14.6" lengthAdjust="spacingAndGlyphs" stroke="#1414a8" stroke-width="0.35">W410</text>
<line x1="626.0" y1="667.5" x2="636.0" y2="667.5" stroke="#1414a8" stroke-width="1" stroke-linecap="square"/>
<line x1="636.0" y1="667.5" x2="648.0" y2="651.0" stroke="#1414a8" stroke-width="1.0"/>
<polygon points="648.0,651.0 645.8,656.8 643.2,654.9" stroke="#1414a8" stroke-width="0.5" fill="#1414a8"/>
<text x="855.0" y="654.5" font-family="Liberation Sans" font-size="5.2" font-weight="bold" fill="#1414a8" text-anchor="start" letter-spacing="0" textLength="13.9" lengthAdjust="spacingAndGlyphs" stroke="#1414a8" stroke-width="0.35">C250</text>
<line x1="852.0" y1="653.5" x2="833.0" y2="653.5" stroke="#1414a8" stroke-width="1" stroke-linecap="square"/>
<line x1="833.0" y1="653.0" x2="820.0" y2="640.0" stroke="#1414a8" stroke-width="1.0"/>
<polygon points="820.0,640.0 825.4,643.1 823.1,645.4" stroke="#1414a8" stroke-width="0.5" fill="#1414a8"/>
<circle cx="835.4" cy="691.0" r="13.3" stroke="#1414a8" stroke-width="1.0" fill="none"/>
<line x1="823.0" y1="691.5" x2="848.0" y2="691.5" stroke="#1414a8" stroke-width="1"/>
<text x="833.5" y="690.0" font-family="Liberation Sans" font-size="6.2" font-weight="bold" fill="#1414a8" text-anchor="start" letter-spacing="0" textLength="4.0" lengthAdjust="spacingAndGlyphs" stroke="#1414a8" stroke-width="0.35">1</text>
<text x="824.4" y="699.2" font-family="Liberation Sans" font-size="6.2" font-weight="bold" fill="#1414a8" text-anchor="start" letter-spacing="0" textLength="20.8" lengthAdjust="spacingAndGlyphs" stroke="#1414a8" stroke-width="0.35">A-05</text>
<text x="829.3" y="676.8" font-family="Liberation Sans" font-size="5.0" font-weight="bold" fill="#1414a8" text-anchor="start" letter-spacing="0" textLength="10.2" lengthAdjust="spacingAndGlyphs" stroke="#1414a8" stroke-width="0.35">SEE</text>
<line x1="823.0" y1="691.5" x2="805.0" y2="691.5" stroke="#1414a8" stroke-width="1" stroke-linecap="square"/>
<line x1="805.0" y1="691.0" x2="787.0" y2="710.0" stroke="#1414a8" stroke-width="1.0"/>
<polygon points="787.0,710.0 790.0,704.5 792.3,706.7" stroke="#1414a8" stroke-width="0.5" fill="#1414a8"/>
<circle cx="686.0" cy="848.6" r="13.3" stroke="#1414a8" stroke-width="1.1" fill="none"/>
<text x="682.0" y="852.6" font-family="Liberation Sans" font-size="11" font-weight="bold" fill="#1414a8" text-anchor="start" letter-spacing="0" textLength="8.0" lengthAdjust="spacingAndGlyphs" stroke="#1414a8" stroke-width="0.6">2</text>
<text x="703.6" y="846.6" font-family="Liberation Sans" font-size="13" font-weight="bold" fill="#1212d4" text-anchor="start" letter-spacing="0" textLength="116.5" lengthAdjust="spacingAndGlyphs" stroke="#1212d4" stroke-width="0.6">STAIR SECTION 2</text>
<line x1="699.0" y1="848.5" x2="766.0" y2="848.5" stroke="#1414a8" stroke-width="1"/>
<rect x="705.0" y="851.5" width="19.0" height="7.0" fill="#1010e0"/>
<rect x="727.0" y="851.5" width="35.0" height="7.0" fill="#1010e0"/>
<line x1="1017.5" y1="270.0" x2="1017.5" y2="735.0" stroke="#c23a9e" stroke-width="1"/>
<line x1="1017.3" y1="735.5" x2="1570.0" y2="735.5" stroke="#c23a9e" stroke-width="1"/>
<line x1="1570.5" y1="735.0" x2="1570.5" y2="270.0" stroke="#c23a9e" stroke-width="1"/>
<line x1="1074.5" y1="273.0" x2="1074.5" y2="356.0" stroke="#34a8e0" stroke-width="1"/>
<line x1="1077.5" y1="273.0" x2="1077.5" y2="356.0" stroke="#34a8e0" stroke-width="1"/>
<line x1="1017.0" y1="356.0" x2="1077.0" y2="356.0" stroke="#34a8e0" stroke-width="2"/>
<line x1="1080.0" y1="356.5" x2="1198.0" y2="356.5" stroke="#1414a8" stroke-width="1"/>
<text x="1084.5" y="354.8" font-family="Liberation Sans" font-size="5.0" font-weight="bold" fill="#1414a8" text-anchor="start" letter-spacing="0" textLength="101.5" lengthAdjust="spacingAndGlyphs" stroke="#1414a8" stroke-width="0.35">ELEV. 11'-9" TOP OF SECOND FLR.</text>
<line x1="1017.0" y1="365.5" x2="1198.0" y2="365.5" stroke="#78e070" stroke-width="1"/>
<line x1="1017.0" y1="368.5" x2="1198.0" y2="368.5" stroke="#78e070" stroke-width="1"/>
<polyline points="1038.0,369.0 1043.0,369.0 1043.0,387.0 1038.0,387.0" stroke="#e23c3c" stroke-width="1.0" fill="none"/>
<polyline points="1118.0,369.0 1123.0,369.0 1123.0,387.0 1118.0,387.0" stroke="#e23c3c" stroke-width="1.0" fill="none"/>
<polyline points="1194.0,369.0 1199.0,369.0 1199.0,387.0 1194.0,387.0" stroke="#e23c3c" stroke-width="1.0" fill="none"/>
<line x1="1017.0" y1="391.0" x2="1202.0" y2="391.0" stroke="#2a5ae0" stroke-width="2"/>
<line x1="1197.5" y1="273.0" x2="1197.5" y2="368.0" stroke="#e23c3c" stroke-width="1"/>
<line x1="1200.5" y1="273.0" x2="1200.5" y2="368.0" stroke="#e23c3c" stroke-width="1"/>
<line x1="1203.5" y1="295.0" x2="1203.5" y2="355.0" stroke="#e23c3c" stroke-width="1"/>
<line x1="1168.0" y1="279.5" x2="1185.0" y2="279.5" stroke="#1414a8" stroke-width="1" stroke-linecap="square"/>
<line x1="1185.0" y1="279.0" x2="1196.0" y2="293.0" stroke="#1414a8" stroke-width="1.0"/>
<polygon points="1196.0,293.0 1191.0,289.3 1193.6,287.3" stroke="#1414a8" stroke-width="0.5" fill="#1414a8"/>
<text x="1144.0" y="280.8" font-family="Liberation Sans" font-size="5.0" font-weight="bold" fill="#1414a8" text-anchor="start" letter-spacing="0" textLength="20.4" lengthAdjust="spacingAndGlyphs" stroke="#1414a8" stroke-width="0.35">CABLES</text>
<polyline points="1200.4,274.4 1446.5,432.3 1446.5,440.0 1420.0,440.0" stroke="#e23c3c" stroke-width="1.0" fill="none"/>
<line x1="1200.4" y1="280.5" x2="1438.0" y2="433.0" stroke="#e23c3c" stroke-width="1.0"/>
<line x1="1203.3" y1="293.5" x2="1420.0" y2="432.5" stroke="#e23c3c" stroke-width="1.0"/>
<line x1="1203.5" y1="293.5" x2="1203.5" y2="346.2" stroke="#e23c3c" stroke-width="1"/>
<line x1="1203.3" y1="346.2" x2="1210.0" y2="351.4" stroke="#e23c3c" stroke-width="1.0"/>
<line x1="1235.6" y1="317.0" x2="1207.7" y2="358.0" stroke="#e23c3c" stroke-width="1.1"/>
<line x1="1239.6" y1="319.0" x2="1211.7" y2="360.0" stroke="#e23c3c" stroke-width="1.1"/>
<line x1="1235.6" y1="317.0" x2="1405.0" y2="425.4" stroke="#d01818" stroke-width="1.7"/>
<line x1="1229.7" y1="328.7" x2="1405.0" y2="440.9" stroke="#d01818" stroke-width="1.7"/>
<line x1="1223.1" y1="338.9" x2="1405.0" y2="455.3" stroke="#d01818" stroke-width="1.7"/>
<line x1="1216.5" y1="350.6" x2="1405.0" y2="471.2" stroke="#d01818" stroke-width="1.7"/>
<line x1="1232.6" y1="323.0" x2="1405.0" y2="433.3" stroke="#e23c3c" stroke-width="0.8"/>
<line x1="1226.4" y1="333.8" x2="1405.0" y2="448.1" stroke="#e23c3c" stroke-width="0.8"/>
<line x1="1219.8" y1="344.7" x2="1405.0" y2="463.2" stroke="#e23c3c" stroke-width="0.8"/>
<line x1="1209.0" y1="358.0" x2="1405.0" y2="483.4" stroke="#e23c3c" stroke-width="1.0"/>
<line x1="1202.0" y1="378.5" x2="1422.7" y2="519.0" stroke="#e23c3c" stroke-width="1.0"/>
<line x1="1202.0" y1="384.0" x2="1422.0" y2="526.0" stroke="#e23c3c" stroke-width="1.0"/>
<line x1="1200.4" y1="300.5" x2="1203.3" y2="300.5" stroke="#e23c3c" stroke-width="1"/>
<line x1="1200.4" y1="315.5" x2="1203.3" y2="315.5" stroke="#e23c3c" stroke-width="1"/>
<line x1="1200.4" y1="330.5" x2="1203.3" y2="330.5" stroke="#e23c3c" stroke-width="1"/>
<line x1="1201.0" y1="373.4" x2="1228.0" y2="373.4" stroke="#404040" stroke-width="3.6"/>
<line x1="1225.3" y1="388.9" x2="1252.3" y2="388.9" stroke="#404040" stroke-width="3.6"/>
<line x1="1249.6" y1="404.4" x2="1276.6" y2="404.4" stroke="#404040" stroke-width="3.6"/>
<line x1="1273.9" y1="419.9" x2="1300.9" y2="419.9" stroke="#404040" stroke-width="3.6"/>
<line x1="1298.2" y1="435.4" x2="1325.2" y2="435.4" stroke="#404040" stroke-width="3.6"/>
<line x1="1322.5" y1="450.9" x2="1349.5" y2="450.9" stroke="#404040" stroke-width="3.6"/>
<line x1="1346.8" y1="466.4" x2="1373.8" y2="466.4" stroke="#404040" stroke-width="3.6"/>
<line x1="1371.1" y1="481.9" x2="1398.1" y2="481.9" stroke="#404040" stroke-width="3.6"/>
<line x1="1395.4" y1="497.4" x2="1422.4" y2="497.4" stroke="#404040" stroke-width="3.6"/>
<line x1="1424.5" y1="417.8" x2="1424.5" y2="541.0" stroke="#e23c3c" stroke-width="1"/>
<line x1="1428.0" y1="417.8" x2="1428.0" y2="541.0" stroke="#a01050" stroke-width="2"/>
<line x1="1424.5" y1="390.0" x2="1424.5" y2="510.0" stroke="#1414a8" stroke-width="1"/>
<line x1="1422.5" y1="534.0" x2="1422.5" y2="665.0" stroke="#38cfe6" stroke-width="1"/>
<line x1="1431.5" y1="534.0" x2="1431.5" y2="665.0" stroke="#38cfe6" stroke-width="1"/>
<line x1="1426.5" y1="534.0" x2="1426.5" y2="665.0" stroke="#1414a8" stroke-width="1"/>
<rect x="1421.5" y="534.5" width="11.0" height="7.0" stroke="#38cfe6" stroke-width="1" fill="none"/>
<line x1="1425.0" y1="510.5" x2="1533.0" y2="510.5" stroke="#1414a8" stroke-width="1"/>
<text x="1438.6" y="509.3" font-family="Liberation Sans" font-size="5.0" font-weight="bold" fill="#1414a8" text-anchor="start" letter-spacing="0" textLength="74.4" lengthAdjust="spacingAndGlyphs" stroke="#1414a8" stroke-width="0.35">ELEV. 5'-10 1/2" TOP OF LANDING</text>
<line x1="1425.0" y1="514.0" x2="1545.0" y2="514.0" stroke="#78e070" stroke-width="2"/>
<line x1="1425.0" y1="520.5" x2="1545.0" y2="520.5" stroke="#e23c3c" stroke-width="1"/>
<line x1="1431.0" y1="542.5" x2="1545.0" y2="542.5" stroke="#e23c3c" stroke-width="1"/>
<rect x="1541.0" y="513.0" width="6.0" height="7.0" fill="#e8d060"/>
<rect x="1422.0" y="513.0" width="6.0" height="7.0" fill="#e8d060"/>
<line x1="1544.5" y1="273.0" x2="1544.5" y2="665.0" stroke="#38cfe6" stroke-width="1"/>
<rect x="1549.0" y="273.0" width="6.0" height="392.0" fill="#fbe4e0"/>
<line x1="1552" y1="273" x2="1552" y2="665" stroke="#e87a6e" stroke-width="4" stroke-dasharray="1 2.5"/>
<line x1="1548.5" y1="273.0" x2="1548.5" y2="665.0" stroke="#38cfe6" stroke-width="1"/>
<line x1="1558.5" y1="273.0" x2="1558.5" y2="665.0" stroke="#38cfe6" stroke-width="1"/>
<line x1="1548.5" y1="368.0" x2="1548.5" y2="386.0" stroke="#101010" stroke-width="1"/>
<line x1="1543.0" y1="368.5" x2="1554.0" y2="368.5" stroke="#101010" stroke-width="1"/>
<line x1="1543.0" y1="386.5" x2="1554.0" y2="386.5" stroke="#101010" stroke-width="1"/>
<line x1="1171.3" y1="588.7" x2="1375.0" y2="466.5" stroke="#e23c3c" stroke-width="1.0"/>
<line x1="1173.4" y1="593.0" x2="1380.0" y2="469.0" stroke="#e23c3c" stroke-width="1.0"/>
<line x1="1177.7" y1="602.0" x2="1395.0" y2="471.6" stroke="#e23c3c" stroke-width="0.8"/>
<line x1="1182.3" y1="611.7" x2="1400.0" y2="481.1" stroke="#d01818" stroke-width="1.7"/>
<line x1="1185.3" y1="618.0" x2="1400.0" y2="489.2" stroke="#e23c3c" stroke-width="0.8"/>
<line x1="1188.2" y1="624.0" x2="1400.0" y2="496.9" stroke="#d01818" stroke-width="1.7"/>
<line x1="1190.8" y1="629.5" x2="1400.0" y2="504.0" stroke="#e23c3c" stroke-width="0.8"/>
<line x1="1193.2" y1="634.5" x2="1400.0" y2="510.4" stroke="#d01818" stroke-width="1.7"/>
<line x1="1197.3" y1="643.0" x2="1410.0" y2="515.4" stroke="#e23c3c" stroke-width="0.9"/>
<line x1="1200.9" y1="650.7" x2="1420.7" y2="518.8" stroke="#e23c3c" stroke-width="1.0"/>
<line x1="1171.3" y1="588.7" x2="1198.0" y2="644.5" stroke="#e23c3c" stroke-width="1.0"/>
<line x1="1175.3" y1="586.7" x2="1202.0" y2="642.5" stroke="#e23c3c" stroke-width="1.0"/>
<line x1="1213.4" y1="665.0" x2="1422.8" y2="535.7" stroke="#e23c3c" stroke-width="1.0"/>
<line x1="1197.5" y1="650.7" x2="1197.5" y2="666.0" stroke="#e23c3c" stroke-width="1"/>
<path d="M1178,605 q-8,8 -2,20 q4,6 10,6" stroke="#e23c3c" fill="none" stroke-width="0.9"/>
<line x1="1412.0" y1="413.8" x2="1380.5" y2="460.0" stroke="#e23c3c" stroke-width="1.0"/>
<line x1="1416.0" y1="415.8" x2="1384.5" y2="462.0" stroke="#e23c3c" stroke-width="1.0"/>
<line x1="1202.0" y1="652.0" x2="1229.0" y2="652.0" stroke="#404040" stroke-width="3.6"/>
<line x1="1226.7" y1="636.6" x2="1253.7" y2="636.6" stroke="#404040" stroke-width="3.6"/>
<line x1="1251.4" y1="621.2" x2="1278.4" y2="621.2" stroke="#404040" stroke-width="3.6"/>
<line x1="1276.1" y1="605.8" x2="1303.1" y2="605.8" stroke="#404040" stroke-width="3.6"/>
<line x1="1300.8" y1="590.4" x2="1327.8" y2="590.4" stroke="#404040" stroke-width="3.6"/>
<line x1="1325.5" y1="575.0" x2="1352.5" y2="575.0" stroke="#404040" stroke-width="3.6"/>
<line x1="1350.2" y1="559.6" x2="1377.2" y2="559.6" stroke="#404040" stroke-width="3.6"/>
<line x1="1374.9" y1="544.2" x2="1401.9" y2="544.2" stroke="#404040" stroke-width="3.6"/>
<line x1="1399.6" y1="528.8" x2="1426.6" y2="528.8" stroke="#404040" stroke-width="3.6"/>
<line x1="1385.0" y1="478.0" x2="1410.0" y2="520.0" stroke="#e23c3c" stroke-width="0.9"/>
<line x1="1392.0" y1="474.0" x2="1417.0" y2="516.0" stroke="#e23c3c" stroke-width="0.9"/>
<rect x="1017.5" y="477.5" width="139.0" height="189.0" stroke="#34a8e0" stroke-width="1" fill="none"/>
<rect x="1017.5" y="481.5" width="134.0" height="185.0" stroke="#34a8e0" stroke-width="1" fill="none"/>
<line x1="1073.5" y1="481.3" x2="1073.5" y2="666.0" stroke="#34a8e0" stroke-width="1"/>
<rect x="1077.5" y="486.5" width="70.0" height="39.0" stroke="#34a8e0" stroke-width="1" fill="none"/>
<line x1="1078.5" y1="491.5" x2="1081.9" y2="488.1" stroke="#202020" stroke-width="0.9"/>
<line x1="1078.5" y1="494.9" x2="1085.2" y2="488.1" stroke="#202020" stroke-width="0.9"/>
<line x1="1078.5" y1="498.2" x2="1088.6" y2="488.1" stroke="#202020" stroke-width="0.9"/>
<line x1="1078.5" y1="501.6" x2="1092.0" y2="488.1" stroke="#202020" stroke-width="0.9"/>
<line x1="1078.5" y1="505.0" x2="1095.4" y2="488.1" stroke="#202020" stroke-width="0.9"/>
<line x1="1078.5" y1="508.4" x2="1098.8" y2="488.1" stroke="#202020" stroke-width="0.9"/>
<line x1="1078.5" y1="511.7" x2="1102.1" y2="488.1" stroke="#202020" stroke-width="0.9"/>
<line x1="1078.5" y1="515.1" x2="1105.5" y2="488.1" stroke="#202020" stroke-width="0.9"/>
<rect x="1077.5" y="530.5" width="70.0" height="39.0" stroke="#34a8e0" stroke-width="1" fill="none"/>
<line x1="1078.5" y1="535.7" x2="1081.9" y2="532.3" stroke="#202020" stroke-width="0.9"/>
<line x1="1078.5" y1="539.0" x2="1085.2" y2="532.3" stroke="#202020" stroke-width="0.9"/>
<line x1="1078.5" y1="542.4" x2="1088.6" y2="532.3" stroke="#202020" stroke-width="0.9"/>
<line x1="1078.5" y1="545.8" x2="1092.0" y2="532.3" stroke="#202020" stroke-width="0.9"/>
<line x1="1078.5" y1="549.2" x2="1095.4" y2="532.3" stroke="#202020" stroke-width="0.9"/>
<line x1="1078.5" y1="552.5" x2="1098.8" y2="532.3" stroke="#202020" stroke-width="0.9"/>
<line x1="1078.5" y1="555.9" x2="1102.1" y2="532.3" stroke="#202020" stroke-width="0.9"/>
<line x1="1078.5" y1="559.3" x2="1105.5" y2="532.3" stroke="#202020" stroke-width="0.9"/>
<rect x="1077.5" y="575.5" width="70.0" height="39.0" stroke="#34a8e0" stroke-width="1" fill="none"/>
<line x1="1078.5" y1="579.9" x2="1081.9" y2="576.5" stroke="#202020" stroke-width="0.9"/>
<line x1="1078.5" y1="583.2" x2="1085.2" y2="576.5" stroke="#202020" stroke-width="0.9"/>
<line x1="1078.5" y1="586.6" x2="1088.6" y2="576.5" stroke="#202020" stroke-width="0.9"/>
<line x1="1078.5" y1="590.0" x2="1092.0" y2="576.5" stroke="#202020" stroke-width="0.9"/>
<line x1="1078.5" y1="593.4" x2="1095.4" y2="576.5" stroke="#202020" stroke-width="0.9"/>
<line x1="1078.5" y1="596.8" x2="1098.8" y2="576.5" stroke="#202020" stroke-width="0.9"/>
<line x1="1078.5" y1="600.1" x2="1102.1" y2="576.5" stroke="#202020" stroke-width="0.9"/>
<line x1="1078.5" y1="603.5" x2="1105.5" y2="576.5" stroke="#202020" stroke-width="0.9"/>
<rect x="1077.5" y="618.5" width="70.0" height="37.0" stroke="#34a8e0" stroke-width="1" fill="none"/>
<line x1="1078.5" y1="623.5" x2="1081.9" y2="620.1" stroke="#202020" stroke-width="0.9"/>
<line x1="1078.5" y1="626.9" x2="1085.2" y2="620.1" stroke="#202020" stroke-width="0.9"/>
<line x1="1078.5" y1="630.2" x2="1088.6" y2="620.1" stroke="#202020" stroke-width="0.9"/>
<line x1="1078.5" y1="633.6" x2="1092.0" y2="620.1" stroke="#202020" stroke-width="0.9"/>
<line x1="1078.5" y1="637.0" x2="1095.4" y2="620.1" stroke="#202020" stroke-width="0.9"/>
<line x1="1078.5" y1="640.4" x2="1098.8" y2="620.1" stroke="#202020" stroke-width="0.9"/>
<line x1="1078.5" y1="643.7" x2="1102.1" y2="620.1" stroke="#202020" stroke-width="0.9"/>
<line x1="1078.5" y1="647.1" x2="1105.5" y2="620.1" stroke="#202020" stroke-width="0.9"/>
<rect x="1017.5" y="495.5" width="42.0" height="65.0" stroke="#34a8e0" stroke-width="1" fill="none"/>
<rect x="1017.5" y="574.5" width="42.0" height="77.0" stroke="#34a8e0" stroke-width="1" fill="none"/>
<line x1="1017.0" y1="560.5" x2="1073.0" y2="560.5" stroke="#34a8e0" stroke-width="1"/>
<line x1="1017.0" y1="574.5" x2="1073.0" y2="574.5" stroke="#34a8e0" stroke-width="1"/>
<line x1="1017.0" y1="666.5" x2="1557.7" y2="666.5" stroke="#e23c3c" stroke-width="1"/>
<line x1="1557.5" y1="666.0" x2="1557.5" y2="718.6" stroke="#e23c3c" stroke-width="1"/>
<line x1="1017.0" y1="676.5" x2="1540.0" y2="676.5" stroke="#e23c3c" stroke-width="1"/>
<line x1="1017.0" y1="717.5" x2="1556.0" y2="717.5" stroke="#e23c3c" stroke-width="1"/>
<line x1="1540.5" y1="666.0" x2="1540.5" y2="718.0" stroke="#e23c3c" stroke-width="1"/>
<line x1="1549.5" y1="666.0" x2="1549.5" y2="735.0" stroke="#1414a8" stroke-width="1"/>
<line x1="1557.5" y1="666.0" x2="1557.5" y2="735.0" stroke="#1414a8" stroke-width="1"/>
<line x1="1416.5" y1="660.0" x2="1416.5" y2="707.0" stroke="#e23c3c" stroke-width="1"/>
<line x1="1419.5" y1="660.0" x2="1419.5" y2="707.0" stroke="#e23c3c" stroke-width="1"/>
<line x1="1432.5" y1="660.0" x2="1432.5" y2="707.0" stroke="#e23c3c" stroke-width="1"/>
<line x1="1435.5" y1="660.0" x2="1435.5" y2="707.0" stroke="#e23c3c" stroke-width="1"/>
<line x1="1171.0" y1="514.5" x2="1198.0" y2="514.5" stroke="#1414a8" stroke-width="1"/>
<line x1="1168.0" y1="517.7" x2="1174.0" y2="511.7" stroke="#1414a8" stroke-width="1.0"/>
<line x1="1195.0" y1="517.7" x2="1201.0" y2="511.7" stroke="#1414a8" stroke-width="1.0"/>
<line x1="1171.5" y1="514.7" x2="1171.5" y2="583.0" stroke="#1414a8" stroke-width="1"/>
<line x1="1198.5" y1="514.7" x2="1198.5" y2="644.0" stroke="#1414a8" stroke-width="1"/>
<text x="1175.0" y="511.6" font-family="Liberation Sans" font-size="6.2" font-weight="bold" fill="#1414a8" text-anchor="start" letter-spacing="0" textLength="19.4" lengthAdjust="spacingAndGlyphs" stroke="#1414a8" stroke-width="0.35">1'-0"</text>
<text x="1176.6" y="523.2" font-family="Liberation Sans" font-size="6.2" font-weight="bold" fill="#1414a8" text-anchor="start" letter-spacing="0" textLength="17.2" lengthAdjust="spacingAndGlyphs" stroke="#1414a8" stroke-width="0.35">[305]</text>
<line x1="1275.5" y1="510.0" x2="1275.5" y2="589.7" stroke="#1414a8" stroke-width="1"/>
<line x1="1270.0" y1="510.5" x2="1297.0" y2="510.5" stroke="#1414a8" stroke-width="1"/>
<line x1="1270.0" y1="589.5" x2="1297.0" y2="589.5" stroke="#1414a8" stroke-width="1"/>
<line x1="1272.0" y1="513.0" x2="1278.0" y2="507.0" stroke="#1414a8" stroke-width="1.0"/>
<line x1="1272.0" y1="592.7" x2="1278.0" y2="586.7" stroke="#1414a8" stroke-width="1.0"/>
<text x="1270.2" y="560.0" font-family="Liberation Sans" font-size="6.2" font-weight="bold" fill="#1414a8" text-anchor="start" letter-spacing="0" textLength="20.3" lengthAdjust="spacingAndGlyphs" transform="rotate(-90 1270.2 560.0)" stroke="#1414a8" stroke-width="0.35">3'-0"</text>
<text x="1282.8" y="560.0" font-family="Liberation Sans" font-size="6.2" font-weight="bold" fill="#1414a8" text-anchor="start" letter-spacing="0" textLength="20.3" lengthAdjust="spacingAndGlyphs" transform="rotate(-90 1282.8 560.0)" stroke="#1414a8" stroke-width="0.35">[914]</text>
<line x1="1296.5" y1="324.0" x2="1296.5" y2="403.0" stroke="#1414a8" stroke-width="1"/>
<line x1="1276.3" y1="324.5" x2="1300.0" y2="324.5" stroke="#1414a8" stroke-width="1"/>
<line x1="1259.0" y1="403.5" x2="1300.0" y2="403.5" stroke="#1414a8" stroke-width="1"/>
<line x1="1293.0" y1="327.0" x2="1299.0" y2="321.0" stroke="#1414a8" stroke-width="1.0"/>
<line x1="1293.0" y1="406.0" x2="1299.0" y2="400.0" stroke="#1414a8" stroke-width="1.0"/>
<text x="1290.4" y="374.2" font-family="Liberation Sans" font-size="6.2" font-weight="bold" fill="#1414a8" text-anchor="start" letter-spacing="0" textLength="19.8" lengthAdjust="spacingAndGlyphs" transform="rotate(-90 1290.4 374.2)" stroke="#1414a8" stroke-width="0.35">3'-0"</text>
<text x="1303.6" y="374.2" font-family="Liberation Sans" font-size="6.2" font-weight="bold" fill="#1414a8" text-anchor="start" letter-spacing="0" textLength="19.8" lengthAdjust="spacingAndGlyphs" transform="rotate(-90 1303.6 374.2)" stroke="#1414a8" stroke-width="0.35">[914]</text>
<text x="1385.8" y="408.7" font-family="Liberation Sans" font-size="5.5" font-weight="bold" fill="#1414a8" text-anchor="start" letter-spacing="0" textLength="15.2" lengthAdjust="spacingAndGlyphs" stroke="#1414a8" stroke-width="0.35">1-1/4"</text>
<text x="1385.8" y="415.8" font-family="Liberation Sans" font-size="5.5" font-weight="bold" fill="#1414a8" text-anchor="start" letter-spacing="0" textLength="14.2" lengthAdjust="spacingAndGlyphs" stroke="#1414a8" stroke-width="0.35">[33]</text>
<line x1="1382.0" y1="419.5" x2="1425.0" y2="419.5" stroke="#1414a8" stroke-width="1"/>
<text x="1156.0" y="630.0" font-family="Liberation Sans" font-size="5.5" font-weight="bold" fill="#1414a8" text-anchor="start" letter-spacing="0" transform="rotate(-30 1156.0 630.0)" stroke="#1414a8" stroke-width="0.35">4"</text>
<text x="1150.0" y="640.0" font-family="Liberation Sans" font-size="5.5" font-weight="bold" fill="#1414a8" text-anchor="start" letter-spacing="0" transform="rotate(-30 1150.0 640.0)" stroke="#1414a8" stroke-width="0.35">[102]</text>
<line x1="1146.0" y1="642.0" x2="1178.0" y2="626.0" stroke="#1414a8" stroke-width="0.9"/>
<text x="1296.0" y="535.0" font-family="Liberation Sans" font-size="5.5" font-weight="bold" fill="#1414a8" text-anchor="start" letter-spacing="0" transform="rotate(60 1296.0 535.0)" stroke="#1414a8" stroke-width="0.35">6"</text>
<text x="1312.0" y="555.0" font-family="Liberation Sans" font-size="5.5" font-weight="bold" fill="#1414a8" text-anchor="start" letter-spacing="0" transform="rotate(60 1312.0 555.0)" stroke="#1414a8" stroke-width="0.35">[152]</text>
<line x1="1313.0" y1="533.0" x2="1319.0" y2="527.0" stroke="#1414a8" stroke-width="1.0"/>
<line x1="1322.0" y1="548.0" x2="1328.0" y2="542.0" stroke="#1414a8" stroke-width="1.0"/>
<circle cx="1292.0" cy="289.8" r="13.0" stroke="#1414a8" stroke-width="1.0" fill="none"/>
<line x1="1279.0" y1="289.5" x2="1305.0" y2="289.5" stroke="#1414a8" stroke-width="1"/>
<text x="1290.0" y="288.2" font-family="Liberation Sans" font-size="6.2" font-weight="bold" fill="#1414a8" text-anchor="start" letter-spacing="0" textLength="4.0" lengthAdjust="spacingAndGlyphs" stroke="#1414a8" stroke-width="0.35">2</text>
<text x="1281.0" y="299.7" font-family="Liberation Sans" font-size="6.2" font-weight="bold" fill="#1414a8" text-anchor="start" letter-spacing="0" textLength="22.0" lengthAdjust="spacingAndGlyphs" stroke="#1414a8" stroke-width="0.35">A-05</text>
<line x1="1279.0" y1="289.5" x2="1258.0" y2="289.5" stroke="#1414a8" stroke-width="1" stroke-linecap="square"/>
<line x1="1258.0" y1="289.8" x2="1235.0" y2="316.0" stroke="#1414a8" stroke-width="1.0"/>
<polygon points="1235.0,316.0 1237.8,310.4 1240.2,312.5" stroke="#1414a8" stroke-width="0.5" fill="#1414a8"/>
<line x1="1240.0" y1="273.0" x2="1210.0" y2="300.0" stroke="#1414a8" stroke-width="1.0"/>
<polygon points="1210.0,300.0 1213.4,294.8 1215.5,297.2" stroke="#1414a8" stroke-width="0.5" fill="#1414a8"/>
<text x="1387.0" y="319.3" font-family="Liberation Sans" font-size="5.0" font-weight="bold" fill="#1414a8" text-anchor="start" letter-spacing="0" textLength="88.0" lengthAdjust="spacingAndGlyphs" stroke="#1414a8" stroke-width="0.35">HSS 1-1/2"x1-1/2" [38x38]</text>
<text x="1387.0" y="325.4" font-family="Liberation Sans" font-size="5.0" font-weight="bold" fill="#1414a8" text-anchor="start" letter-spacing="0" textLength="41.0" lengthAdjust="spacingAndGlyphs" stroke="#1414a8" stroke-width="0.35">RAILING (TYP.)</text>
<line x1="1383.0" y1="317.5" x2="1357.0" y2="317.5" stroke="#1414a8" stroke-width="1" stroke-linecap="square"/>
<line x1="1357.0" y1="317.5" x2="1323.0" y2="351.0" stroke="#1414a8" stroke-width="1.0"/>
<polygon points="1323.0,351.0 1326.2,345.6 1328.4,347.9" stroke="#1414a8" stroke-width="0.5" fill="#1414a8"/>
<text x="1448.6" y="367.6" font-family="Liberation Sans" font-size="5.0" font-weight="bold" fill="#1414a8" text-anchor="start" letter-spacing="0" textLength="57.3" lengthAdjust="spacingAndGlyphs" stroke="#1414a8" stroke-width="0.35">3/8" CABLES (TYP.)</text>
<line x1="1446.0" y1="365.5" x2="1402.0" y2="365.5" stroke="#1414a8" stroke-width="1" stroke-linecap="square"/>
<line x1="1402.0" y1="365.0" x2="1365.0" y2="389.0" stroke="#1414a8" stroke-width="1.0"/>
<polygon points="1365.0,389.0 1369.2,384.4 1370.9,387.1" stroke="#1414a8" stroke-width="0.5" fill="#1414a8"/>
<text x="1468.9" y="415.6" font-family="Liberation Sans" font-size="5.0" font-weight="bold" fill="#1414a8" text-anchor="start" letter-spacing="0" textLength="62.1" lengthAdjust="spacingAndGlyphs" stroke="#1414a8" stroke-width="0.35">HSS 1-1/2"x1-1/2"</text>
<text x="1468.9" y="421.4" font-family="Liberation Sans" font-size="5.0" font-weight="bold" fill="#1414a8" text-anchor="start" letter-spacing="0" textLength="64.1" lengthAdjust="spacingAndGlyphs" stroke="#1414a8" stroke-width="0.35">[38x38] POSTS (TYP.)</text>
<line x1="1466.0" y1="413.5" x2="1455.0" y2="413.5" stroke="#1414a8" stroke-width="1" stroke-linecap="square"/>
<line x1="1455.0" y1="413.5" x2="1428.0" y2="438.0" stroke="#1414a8" stroke-width="1.0"/>
<polygon points="1428.0,438.0 1431.4,432.8 1433.5,435.2" stroke="#1414a8" stroke-width="0.5" fill="#1414a8"/>
<text x="1460.5" y="446.5" font-family="Liberation Sans" font-size="5.0" font-weight="bold" fill="#1414a8" text-anchor="start" letter-spacing="0" textLength="76.5" lengthAdjust="spacingAndGlyphs" stroke="#1414a8" stroke-width="0.35">POLISHED ALUM. CHECKER</text>
<text x="1460.5" y="452.8" font-family="Liberation Sans" font-size="5.0" font-weight="bold" fill="#1414a8" text-anchor="start" letter-spacing="0" textLength="57.8" lengthAdjust="spacingAndGlyphs" stroke="#1414a8" stroke-width="0.35">PLATE PANEL (TYP.)</text>
<line x1="1457.0" y1="444.5" x2="1440.0" y2="444.5" stroke="#1414a8" stroke-width="1" stroke-linecap="square"/>
<line x1="1440.0" y1="444.5" x2="1414.0" y2="472.0" stroke="#1414a8" stroke-width="1.0"/>
<polygon points="1414.0,472.0 1417.0,466.5 1419.3,468.7" stroke="#1414a8" stroke-width="0.5" fill="#1414a8"/>
<text x="1459.0" y="466.5" font-family="Liberation Sans" font-size="5.0" font-weight="bold" fill="#1414a8" text-anchor="start" letter-spacing="0" textLength="77.0" lengthAdjust="spacingAndGlyphs" stroke="#1414a8" stroke-width="0.35">POLISHED ALUM. CHECKER</text>
<text x="1459.0" y="472.8" font-family="Liberation Sans" font-size="5.0" font-weight="bold" fill="#1414a8" text-anchor="start" letter-spacing="0" textLength="58.0" lengthAdjust="spacingAndGlyphs" stroke="#1414a8" stroke-width="0.35">PLATE PANEL (TYP.)</text>
<line x1="1456.0" y1="464.5" x2="1430.0" y2="464.5" stroke="#1414a8" stroke-width="1" stroke-linecap="square"/>
<line x1="1430.0" y1="464.0" x2="1411.0" y2="488.0" stroke="#1414a8" stroke-width="1.0"/>
<polygon points="1411.0,488.0 1413.5,482.3 1416.0,484.3" stroke="#1414a8" stroke-width="0.5" fill="#1414a8"/>
<circle cx="1206.9" cy="757.0" r="13.0" stroke="#1414a8" stroke-width="1.1" fill="none"/>
<text x="1203.0" y="761.0" font-family="Liberation Sans" font-size="11" font-weight="bold" fill="#1414a8" text-anchor="start" letter-spacing="0" textLength="8.0" lengthAdjust="spacingAndGlyphs" stroke="#1414a8" stroke-width="0.6">1</text>
<text x="1226.6" y="753.4" font-family="Liberation Sans" font-size="13" font-weight="bold" fill="#1212d4" text-anchor="start" letter-spacing="0" textLength="103.1" lengthAdjust="spacingAndGlyphs" stroke="#1212d4" stroke-width="0.6">STAIR DETAIL 1</text>
<line x1="1220.0" y1="755.5" x2="1277.0" y2="755.5" stroke="#1414a8" stroke-width="1"/>
<rect x="1226.6" y="759.4" width="18.1" height="6.6" fill="#1010e0"/>
<rect x="1247.0" y="759.4" width="34.6" height="6.6" fill="#1010e0"/>
<line x1="1017.5" y1="270.0" x2="1017.5" y2="735.0" stroke="#c23a9e" stroke-width="1"/>
<line x1="1017.3" y1="735.5" x2="1570.0" y2="735.5" stroke="#c23a9e" stroke-width="1"/>
<line x1="1019.5" y1="975.0" x2="1019.5" y2="850.6" stroke="#c23a9e" stroke-width="1"/>
<line x1="1019.4" y1="850.5" x2="1539.7" y2="850.5" stroke="#c23a9e" stroke-width="1"/>
<line x1="1539.5" y1="850.6" x2="1539.5" y2="975.0" stroke="#c23a9e" stroke-width="1"/>
<circle cx="1275" cy="1033.5" r="138.5" stroke="#1414a8" stroke-width="1.0" fill="none"/>
<polyline points="1222.5,905.0 1295.0,950.3 1282.8,975.0" stroke="#e23c3c" stroke-width="1.0" fill="none"/>
<line x1="1337.5" y1="909.7" x2="1297.0" y2="975.0" stroke="#e23c3c" stroke-width="1.0"/>
<line x1="1340.5" y1="911.0" x2="1300.0" y2="975.0" stroke="#e23c3c" stroke-width="1.0"/>
<line x1="1353.0" y1="919.0" x2="1318.8" y2="975.0" stroke="#e23c3c" stroke-width="1.0"/>
<line x1="1356.0" y1="920.0" x2="1322.0" y2="975.0" stroke="#e23c3c" stroke-width="1.0"/>
<line x1="1382.8" y1="877.5" x2="1364.0" y2="877.5" stroke="#1414a8" stroke-width="1"/>
<line x1="1364.0" y1="877.8" x2="1270.0" y2="975.0" stroke="#1414a8" stroke-width="1.0"/>
<text x="1386.0" y="879.6" font-family="Liberation Sans" font-size="5.0" font-weight="bold" fill="#1414a8" text-anchor="start" letter-spacing="0" textLength="80.6" lengthAdjust="spacingAndGlyphs" stroke="#1414a8" stroke-width="0.35">S.S. BOLT AND ACORN NUT</text>
<text x="1386.0" y="885.8" font-family="Liberation Sans" font-size="5.0" font-weight="bold" fill="#1414a8" text-anchor="start" letter-spacing="0" textLength="53.0" lengthAdjust="spacingAndGlyphs" stroke="#1414a8" stroke-width="0.35">(NUT TO OUTSIDE)</text>
<line x1="1376.6" y1="911.5" x2="1356.0" y2="911.5" stroke="#1414a8" stroke-width="1"/>
<line x1="1356.0" y1="911.0" x2="1297.0" y2="975.0" stroke="#1414a8" stroke-width="1.0"/>
<text x="1379.7" y="914.6" font-family="Liberation Sans" font-size="5.0" font-weight="bold" fill="#1414a8" text-anchor="start" letter-spacing="0" textLength="67.8" lengthAdjust="spacingAndGlyphs" stroke="#1414a8" stroke-width="0.35">4x38x38 PLATE-WELDED</text>
<text x="1379.7" y="920.8" font-family="Liberation Sans" font-size="5.0" font-weight="bold" fill="#1414a8" text-anchor="start" letter-spacing="0" textLength="46.9" lengthAdjust="spacingAndGlyphs" stroke="#1414a8" stroke-width="0.35">TO POST (PAINT)</text>
<line x1="1591.0" y1="273.0" x2="1591.0" y2="971.0" stroke="#d21ee0" stroke-width="3"/>
<text x="1633.4" y="292.3" font-family="Liberation Sans" font-size="12.8" font-weight="normal" fill="#1010b0" text-anchor="start" letter-spacing="0" textLength="146.0" lengthAdjust="spacingAndGlyphs" stroke="#1010b0" stroke-width="0.45">CONSULTING  ENGINEERS</text>
<text x="1614.6" y="337.4" font-family="Liberation Sans" font-size="12.8" font-weight="normal" fill="#1010b0" text-anchor="start" letter-spacing="0" textLength="68.6" lengthAdjust="spacingAndGlyphs" stroke="#1010b0" stroke-width="0.45">SASKATOON</text>
<text x="1739.2" y="337.4" font-family="Liberation Sans" font-size="12.8" font-weight="normal" fill="#1010b0" text-anchor="start" letter-spacing="0" textLength="93.6" lengthAdjust="spacingAndGlyphs" stroke="#1010b0" stroke-width="0.45">SASKATCHEWAN</text>
<line x1="1591.5" y1="651.5" x2="1818.2" y2="651.5" stroke="#40d040" stroke-width="1"/>
<line x1="1591.5" y1="667.5" x2="1818.2" y2="667.5" stroke="#40d040" stroke-width="1"/>
<line x1="1591.5" y1="684.5" x2="1818.2" y2="684.5" stroke="#40d040" stroke-width="1"/>
<line x1="1591.5" y1="701.5" x2="1818.2" y2="701.5" stroke="#40d040" stroke-width="1"/>
<line x1="1591.5" y1="718.5" x2="1818.2" y2="718.5" stroke="#40d040" stroke-width="1"/>
<line x1="1591.5" y1="734.5" x2="1818.2" y2="734.5" stroke="#40d040" stroke-width="1"/>
<line x1="1613.5" y1="651.2" x2="1613.5" y2="734.5" stroke="#40d040" stroke-width="1"/>
<line x1="1766.5" y1="651.2" x2="1766.5" y2="734.5" stroke="#40d040" stroke-width="1"/>
<line x1="1818.5" y1="651.2" x2="1818.5" y2="734.5" stroke="#40d040" stroke-width="1"/>
<text x="1623.0" y="698.8" font-family="Liberation Sans" font-size="11" font-weight="normal" fill="#1414a8" text-anchor="start" letter-spacing="0" textLength="74.0" lengthAdjust="spacingAndGlyphs">GENERAL REVISION</text>
<text x="1777.0" y="698.8" font-family="Liberation Sans" font-size="11" font-weight="normal" fill="#1414a8" text-anchor="start" letter-spacing="0" textLength="40.4" lengthAdjust="spacingAndGlyphs">17/12/01</text>
<text x="1623.0" y="715.2" font-family="Liberation Sans" font-size="11" font-weight="normal" fill="#1414a8" text-anchor="start" letter-spacing="0" textLength="120.4" lengthAdjust="spacingAndGlyphs">RELEASED FOR BLDG. PERMIT</text>
<text x="1777.0" y="715.2" font-family="Liberation Sans" font-size="11" font-weight="normal" fill="#1414a8" text-anchor="start" letter-spacing="0" textLength="40.4" lengthAdjust="spacingAndGlyphs">20/11/01</text>
<text x="1594.4" y="730.5" font-family="Liberation Sans" font-size="7" font-weight="normal" fill="#1414a8" text-anchor="start" letter-spacing="0" textLength="16.4" lengthAdjust="spacingAndGlyphs" stroke="#1414a8" stroke-width="0.35">REV</text>
<text x="1624.4" y="730.5" font-family="Liberation Sans" font-size="7" font-weight="normal" fill="#1414a8" text-anchor="start" letter-spacing="0" textLength="32.8" lengthAdjust="spacingAndGlyphs" stroke="#1414a8" stroke-width="0.35">REVISION</text>
<text x="1769.7" y="730.5" font-family="Liberation Sans" font-size="7" font-weight="normal" fill="#1414a8" text-anchor="start" letter-spacing="0" textLength="18.5" lengthAdjust="spacingAndGlyphs" stroke="#1414a8" stroke-width="0.35">DATE</text>
<polygon points="1605.5,686.0 1598.0,700.0 1613.0,700.0" stroke="#20b8d0" stroke-width="1.0" fill="none"/>
<text x="1605.5" y="697.5" font-family="Liberation Sans" font-size="9" font-weight="normal" fill="#1414a8" text-anchor="middle" letter-spacing="0">B</text>
<polygon points="1605.5,703.5 1598.0,717.5 1613.0,717.5" stroke="#20b8d0" stroke-width="1.0" fill="none"/>
<text x="1605.5" y="715.0" font-family="Liberation Sans" font-size="9" font-weight="normal" fill="#1414a8" text-anchor="middle" letter-spacing="0">A</text>
<text x="1605.5" y="754.2" font-family="Liberation Sans" font-size="16" font-weight="normal" fill="#1414a8" text-anchor="start" letter-spacing="0" textLength="75.0" lengthAdjust="spacingAndGlyphs">revisions</text>
<text x="1605.5" y="829.8" font-family="Liberation Sans" font-size="14" font-weight="normal" fill="#1414a8" text-anchor="start" letter-spacing="0" textLength="40.2" lengthAdjust="spacingAndGlyphs">project</text>
<text x="1620.2" y="848.3" font-family="Liberation Sans" font-size="14" font-weight="normal" fill="#d01818" text-anchor="start" letter-spacing="0" textLength="226.8" lengthAdjust="spacingAndGlyphs">INTERNATIONAL ROAD DYNAMICS</text>
<text x="1620.2" y="863.9" font-family="Liberation Sans" font-size="14" font-weight="normal" fill="#d01818" text-anchor="start" letter-spacing="0" textLength="130.2" lengthAdjust="spacingAndGlyphs">ADDITION - PHASE1</text>
<text x="1620.2" y="879.5" font-family="Liberation Sans" font-size="14" font-weight="normal" fill="#d01818" text-anchor="start" letter-spacing="0" textLength="90.4" lengthAdjust="spacingAndGlyphs">321 FIRST ST.</text>
<text x="1620.2" y="895.1" font-family="Liberation Sans" font-size="14" font-weight="normal" fill="#d01818" text-anchor="start" letter-spacing="0" textLength="159.0" lengthAdjust="spacingAndGlyphs">SASKATOON,  SK  99999</text>
<line x1="1859.5" y1="273" x2="1859.5" y2="971" stroke="#404040" stroke-width="1" stroke-dasharray="4 3"/>
<line x1="28.0" y1="273.0" x2="28.0" y2="971.0" stroke="#d21ee0" stroke-width="2"/>
<rect x="1871.0" y="273.0" width="49.0" height="698.0" fill="#808080"/>
<rect x="1869.5" y="310" width="46" height="190" rx="4" fill="#8b8b8b" stroke="#a4a4a4" stroke-width="1"/>
<line x1="1870.5" y1="312.0" x2="1870.5" y2="498.0" stroke="#e0e0e0" stroke-width="1"/>
<circle cx="1906.8" cy="318.0" r="5.0" stroke="#a2a2a2" stroke-width="1.2" fill="#9a9a9a"/>
<path d="M1904.5,315.7 l4.6,4.6 M1909.1,315.7 l-4.6,4.6" stroke="#8b8b8b" stroke-width="1.2"/>
<line x1="1872.0" y1="325.5" x2="1913.0" y2="325.5" stroke="#979797" stroke-width="1"/>
<path d="M1876,350 q0,-13 13,-13 h9 q5,0 5,5 v9 q0,12 -14,12.5 q-13,0 -13,-13.5 z" stroke="#a2a2a2" stroke-width="2.4" fill="none"/>
<circle cx="1888.7" cy="350.3" r="5.5" stroke="#a2a2a2" stroke-width="2.2" fill="none"/>
<line x1="1884.0" y1="357.0" x2="1880.0" y2="361.0" stroke="#a2a2a2" stroke-width="2"/>
<text x="1892.9" y="368.8" font-family="Liberation Sans" font-size="11" font-weight="bold" fill="#8c9cb8" text-anchor="start" letter-spacing="0" textLength="17.4" lengthAdjust="spacingAndGlyphs" stroke="#8c9cb8" stroke-width="0.6">2D</text>
<line x1="1872.0" y1="377.5" x2="1913.0" y2="377.5" stroke="#979797" stroke-width="1"/>
<path d="M1880,405 q-6,-5 -2,-7 q2,-1 5,2 l3,3 v-14 q0,-3 2.5,-3 q2.5,0 2.5,3 v-3 q0,-3 2.5,-3 q2.5,0 2.5,3 v3 q0,-3 2.5,-3 q2.5,0 2.5,3 v4 q0,-2.5 2.5,-2.5 q2.5,0 2.5,2.5 v9 q0,12 -12,12 q-6,0 -9,-4 z" stroke="#a2a2a2" stroke-width="2" fill="none"/>
<path d="M1876,426 l18,18 M1897,426 l-21,21" stroke="#a2a2a2" stroke-width="1.5"/>
<polygon points="1875,425 1881,426.5 1876.5,431" fill="#a2a2a2"/><polygon points="1898,425 1892,426.5 1896.5,431" fill="#a2a2a2"/><polygon points="1875,448 1876.5,442 1881,446.5" fill="#a2a2a2"/>
<circle cx="1898.0" cy="447.8" r="6.2" stroke="#a2a2a2" stroke-width="2.2" fill="none"/>
<line x1="1902.5" y1="452.5" x2="1909.0" y2="459.0" stroke="#a2a2a2" stroke-width="3"/>
<polygon points="1889,470.5 1897,470.5 1893,475" fill="#a2a2a2"/>
<circle cx="1906.8" cy="492.0" r="5.0" stroke="#a2a2a2" stroke-width="1.2" fill="none"/>
<line x1="1904.0" y1="492.5" x2="1909.6" y2="492.5" stroke="#a2a2a2" stroke-width="1"/>
<rect x="1829" y="293" width="18.5" height="8" fill="#f0f0f0" stroke="#707070" stroke-width="1.2"/>
<rect x="1861" y="289" width="12" height="12" fill="#f0f0f0" stroke="#303030" stroke-width="1.5"/>
<path d="M1864,286 h12 v12" fill="none" stroke="#303030" stroke-width="1.5"/>
<rect x="1864.5" y="292.5" width="5.0" height="5.0" fill="#303030"/>
<path d="M1891,288.5 l14,11 M1905,288.5 l-14,11" stroke="#202020" stroke-width="4.6"/>
<path d="M1891,288.5 l14,11 M1905,288.5 l-14,11" stroke="#f4f4f4" stroke-width="1.8"/>
</svg>

<!-- ===== STATUS BAR ===== -->
<div class="a" style="left:0;top:971px;width:1920px;height:6px;background:#3b4453"></div>
<div class="a" style="left:0;top:1020px;width:1920px;height:3px;background:#f0f0f0"></div>
<div class="t" style="left:88.5px;top:988px;font-size:18px;transform:scaleX(1.0198);transform-origin:0 0">Model</div>
<div class="t" style="left:175px;top:988px;font-size:18px;font-weight:bold;transform:scaleX(0.9583);transform-origin:0 0">SECTIONS AND DETAILS</div>
<div class="a" style="left:1556px;top:981px;width:225px;height:35px;background:#3b4453"></div>
<div class="t" style="left:1594.5px;top:990px;font-size:18px;transform:scaleX(0.9677);transform-origin:0 0">0.2542, 7.9479, 0.0000</div>
<div class="a" style="left:1788px;top:982px;width:34px;height:34px;background:#5b8ac3"></div>
<div class="a" style="left:1828px;top:981px;width:84px;height:35px;background:#3b4453"></div>

<svg style="left:0;top:0" width="1920" height="1023">
<!-- title bar logo -->
<polygon points="29,6 56,6 56,33 29,33" fill="#e8104a"/>
<polygon points="23,9 29,6 29,33 23,36" fill="#f27096"/>
<polygon points="56,12 60,12 60,38 27,38 27,33 56,33" fill="#a8102f"/>
<path d="M37,12 h5 q7,0 7,7.5 q0,8 -7,8 h-5 z M40.5,15 v9.5 h1.5 q3.5,0 3.5,-4.7 q0,-4.8 -3.5,-4.8 z" fill="#fff" fill-rule="evenodd"/>
<polygon points="63,19 73.5,19 68.2,25.2" fill="#d8d8d8" stroke="#111" stroke-width="0.8"/>
<!-- folder small -->
<g stroke="#111" stroke-width="1" fill="#d9d9d9">
<path d="M92.5,12.5 h8 l2,2.5 h9 v6 h-13 l-5.5,12 h-0.5 z"/>
<path d="M98,21 h18 l-5,12.5 h-19 z"/>
</g>
<!-- dwg convert small -->
<rect x="127.5" y="11" width="19" height="16" fill="#3569b0"/>
<polygon points="141,11 146.5,11 146.5,16.5" fill="#a9c4e8"/>
<path d="M127.5,19 h19 M133.5,11 v16" stroke="#fff" stroke-width="1"/>
<rect x="131.5" y="17" width="4" height="4" fill="#3569b0" stroke="#fff" stroke-width="1"/>
<polygon points="127.5,26.5 141,26.5 142,33 127.5,33" fill="#f0b320"/>
<path d="M145,33 a5,5 0 0 1 2,-9" stroke="#7cc8f0" stroke-width="1.6" fill="none"/>
<path d="M149,25 a5,5 0 0 1 -1,9" stroke="#ee6a6a" stroke-width="1.6" fill="none"/>
<!-- printer small -->
<g stroke="#111" stroke-width="1">
<rect x="168.5" y="10.5" width="15" height="7" fill="#fafafa"/>
<rect x="164" y="15" width="24" height="16" fill="#f5f5f5"/>
<rect x="164.5" y="23" width="23" height="8" fill="#cfcfcf" stroke="none"/>
<rect x="169" y="28" width="14" height="7" fill="#86c6f2"/>
</g>
<!-- batch plot small -->
<g stroke="#111" stroke-width="1">
<rect x="203.5" y="10.5" width="11" height="6" fill="#fafafa"/>
<rect x="200" y="15" width="18" height="12" fill="#f5f5f5"/>
<rect x="204" y="25" width="11" height="6" fill="#86c6f2"/>
</g>
<polygon points="210,29 217,29 217,26.5 224,31 217,35 217,32.5 210,32.5" fill="#66b8ee" stroke="#111" stroke-width="0.6"/>
<!-- preview small -->
<path d="M235.5,10.5 h18 l6,6 v12.5 h-24 z" fill="#d9d9d9" stroke="#111" stroke-width="1"/>
<polygon points="253.5,10.5 259.5,16.5 253.5,16.5" fill="#f5f5f5"/>
<circle cx="248.5" cy="27" r="4.2" fill="#111" stroke="#fff" stroke-width="1.8"/>
<line x1="251.5" y1="30" x2="254.5" y2="33.5" stroke="#e9c48a" stroke-width="1.8"/>
<!-- customize -->
<rect x="271.5" y="16" width="12.5" height="2.2" fill="#dcdcdc"/>
<polygon points="271.5,21 284,21 277.8,27" fill="#dcdcdc"/>
<!-- window controls -->
<line x1="1739" y1="21.5" x2="1755" y2="21.5" stroke="#e8e8e8" stroke-width="1.2"/>
<rect x="1809.5" y="16.5" width="11" height="11" rx="1.5" fill="none" stroke="#e8e8e8" stroke-width="1.2"/>
<path d="M1812.5,14.5 h8 q2.5,0 2.5,2.5 v8" fill="none" stroke="#e8e8e8" stroke-width="1.2"/>
<path d="M1877,14 l15,15 M1892,14 l-15,15" stroke="#e8e8e8" stroke-width="1.3"/>

<!-- tab row small icon -->
<rect x="118" y="59.5" width="23.5" height="11.5" fill="#f2f2f2" stroke="#111" stroke-width="0.8"/>
<polygon points="125.5,68 133.5,68 129.5,63.5" fill="#444"/>
<polygon points="145,63.5 152.5,63.5 148.7,68" fill="#dcdcdc"/>

<!-- ===== Files panel ===== -->
<g stroke="#222" stroke-width="1.2" fill="#d9d9d9">
<path d="M12,96 h18 l3.5,4 h14.5 v11 l-22,0 l-10.5,24 z"/>
<path d="M25.6,110.6 h34.4 l-12,24.4 h-36 z"/>
</g>
<!-- DWG convert big -->
<rect x="77" y="90.6" width="36" height="26" fill="#2f66ad"/>
<polygon points="103,90.6 113,100.6 103,100.6" fill="#a3bddf"/>
<polygon points="103,90.6 113,100.6 113,90.6" fill="#3b4453"/>
<path d="M77,104.5 h36 M88.5,90.6 v26" stroke="#fff" stroke-width="1.3"/>
<rect x="85" y="101" width="7" height="7" fill="#2f66ad" stroke="#fff" stroke-width="1.3"/>
<polygon points="77,116.5 97,116.5 103,119 103,135 77,135" fill="#f0b429"/>
<text x="79" y="132" font-family="Liberation Sans" font-size="10.5" fill="#3b2f1a">DWG</text>
<path d="M106,135 a10,10 0 0 1 3,-18" stroke="#7fc4ee" stroke-width="3.2" fill="none"/>
<polygon points="105,116 113,114 111,121" fill="#7fc4ee"/>
<path d="M114,116.5 a10,10 0 0 1 -4,20" stroke="#ee6f6a" stroke-width="3.2" fill="none"/>
<polygon points="111,139 116,133 119,139" fill="#ee6f6a"/>

<!-- Plot big -->
<rect x="147.5" y="99.4" width="48.5" height="31" fill="#f2f2f2" stroke="#1e1e1e" stroke-width="1.2"/>
<rect x="148" y="115" width="47.5" height="15" fill="#cfcfcf"/>
<rect x="155.6" y="90.6" width="32.4" height="17" fill="#fff" stroke="#1e1e1e" stroke-width="1.3"/>
<rect x="155.6" y="121.9" width="32.4" height="16.9" fill="#86c6f5" stroke="#1e1e1e" stroke-width="1.3"/>
<!-- batch plot small -->
<g stroke="#1e1e1e" stroke-width="1">
<rect x="210.5" y="92.5" width="12" height="6" fill="#fafafa"/>
<rect x="206.5" y="96.5" width="19" height="12" fill="#f2f2f2"/>
<rect x="211" y="106" width="11" height="6" fill="#86c6f5"/>
</g>
<polygon points="217,109 224,109 224,106 231,111.5 224,117 224,114 217,114" fill="#62b6ee"/>
<!-- preview small -->
<path d="M206.5,128 h17.5 l7,7 v13 h-24.5 z" fill="#d9d9d9" stroke="#1e1e1e" stroke-width="1"/>
<polygon points="224,128 231,135 224,135" fill="#f5f5f5"/>
<circle cx="219" cy="145.5" r="4.3" fill="#2a2a2a" stroke="#fafafa" stroke-width="2"/>
<line x1="222.5" y1="149" x2="225" y2="152" stroke="#e9c48a" stroke-width="1.8"/>
<!-- output arrow -->
<path d="M225.5,209 l6,6 M231.5,210 v5 h-5" stroke="#e8e8e8" stroke-width="1.4" fill="none"/>

<!-- ===== Navigation ===== -->
<g stroke="#e6e6e6" stroke-width="1.3" fill="none">
<line x1="253" y1="119.5" x2="283" y2="148"/>
<line x1="289" y1="119.5" x2="253" y2="154.5"/>
<circle cx="283.6" cy="149.8" r="8.5" stroke-width="1.6"/>
</g>
<polygon points="250,116 259,119 253,125" fill="#e6e6e6"/>
<polygon points="292,116 289,125 283,119" fill="#e6e6e6"/>
<polygon points="250,158 253,149 259,155" fill="#e6e6e6"/>
<line x1="290" y1="156" x2="297" y2="163" stroke="#e0b078" stroke-width="3.5"/>
<polygon points="369,137.5 376,137.5 372.5,142" fill="#e0e0e0"/>
<!-- hand -->
<g stroke="#dcdcdc" stroke-width="3.3" stroke-linecap="round">
<line x1="397.5" y1="110" x2="390.8" y2="104.5"/>
<line x1="397" y1="104" x2="394.8" y2="93.8"/>
<line x1="401.2" y1="103" x2="401.2" y2="92.5"/>
<line x1="405" y1="104" x2="407.2" y2="94"/>
<line x1="408" y1="107" x2="412" y2="99.5"/>
</g>
<path d="M394.5,104 q0,-3 3,-3 h8.5 q4,0 4,4 v4 q0,7 -6.5,7 h-2.5 q-4.5,0 -6.5,-4 z" fill="#dcdcdc"/>
<!-- orbit -->
<g fill="none" stroke="#e6e6e6" stroke-width="1.3">
<path d="M396,132 q5,-7 11,-2 q6,6 4,12 q-3,8 -9,9 q-6,0 -8,-7 q-2,-7 2,-12 z"/>
<path d="M394,134 q-6,4 -4,7 q2,4 10,3"/>
<path d="M408,131 q6,3 4,8"/>
</g>
<polygon points="406,128 411,130 407,133" fill="#e6e6e6"/>
<path d="M397.5,139.5 h6 M400.5,136.5 v6" stroke="#6fd0d0" stroke-width="1.1"/>
<!-- showmotion mouse -->
<rect x="390.5" y="167" width="17" height="21" rx="8.5" fill="#e6e6e6"/>
<line x1="399" y1="167" x2="399" y2="177" stroke="#3b4453" stroke-width="1"/>
<polygon points="406,164 411.5,170 408.5,170 408.5,177 404,177 404,170 401,170" fill="#5fb8f0"/>
<polygon points="420,173 427,173 423.5,177" fill="#e0e0e0"/>
</svg>


<svg style="left:0;top:0" width="1920" height="1023">
<!-- ===== View panel dropdowns ===== -->
<rect x="443" y="87" width="225" height="34" fill="#2c333e"/>
<rect x="445" y="89" width="221" height="30" fill="#4a5467"/>
<rect x="443" y="123" width="225" height="33" fill="#2c333e"/>
<rect x="445" y="125" width="221" height="29" fill="#4a5467"/>
<rect x="447.8" y="92.9" width="24.2" height="23.8" fill="#000"/>
<g fill="none" stroke="#d0d0d0" stroke-width="0.9">
<rect x="461" y="96" width="8" height="11"/>
<circle cx="458" cy="107" r="6.5"/>
</g>
<rect x="447.8" y="128.5" width="24.2" height="24" fill="#f4f4f4"/>
<path d="M452,133.5 h17 M452,138.5 h17 M452,143.5 h17 M457,133 v17 M462,133 v17 M467,133 v17" stroke="#b8b8b8" stroke-width="0.7"/>
<polygon points="451.5,133.5 451.5,149.5 461.5,149.5" fill="#1a1a1a"/>
<polygon points="453.5,142 453.5,147.5 457.5,147.5" fill="#f4f4f4"/>
<polygon points="651,101 663,101 657,107" fill="#e6e6e6"/>
<polygon points="651,137 663,137 657,143" fill="#e6e6e6"/>
<!-- cubes -->
<g stroke="#1e1e1e" stroke-width="0.8">
<polygon points="450,171 467,171 473,166 456,166" fill="#f0f0f0"/>
<polygon points="450,171 467,171 467,189 450,189" fill="#d8d8d8"/>
<polygon points="467,171 473,166 473,184 467,189" fill="#bdbdbd"/>
<polygon points="486,171 497,165 508,171 497,177" fill="#f0f0f0"/>
<polygon points="486,171 497,177 497,190 486,184" fill="#d0d0d0"/>
<polygon points="497,177 508,171 508,184 497,190" fill="#e8e8e8"/>
</g>
<g stroke="#1e1e1e" stroke-width="0.8">
<rect x="521" y="166" width="14" height="12" fill="#e6e6e6"/>
<rect x="531" y="177" width="15" height="13" fill="#f4f4f4"/>
</g>
<circle cx="528" cy="173" r="4" fill="none" stroke="#1e1e1e" stroke-width="1.2"/>
<path d="M534,181 h9 M534,184.5 h9 M534,188 h9" stroke="#333" stroke-width="1"/>

<!-- ===== Layers ===== -->
<g stroke="#1e1e1e" stroke-width="0.7" fill="#dcdcdc">
<polygon points="686,92 701,92 695,99 680,99"/>
<polygon points="686,98 701,98 695,105 680,105"/>
<polygon points="686,104 699,104 693,111 680,111"/>
</g>
<rect x="693" y="101" width="12.5" height="15" fill="#f4f4f4" stroke="#1e1e1e" stroke-width="0.8"/>
<rect x="696" y="104" width="7" height="3.5" fill="#5fb8f0"/>
<path d="M697,112 h6 M697,112 l2,-1.5 M697,112 l2,1.5" stroke="#1e1e1e" stroke-width="0.8" fill="none"/>
<polygon points="729,92 743,92 737,101 723,101" fill="#dcdcdc"/>
<g stroke="#5fd0e0" stroke-width="1.1"><path d="M739,103 v11 M734,108.5 h10 M735.2,104.7 l7.6,7.6 M742.8,104.7 l-7.6,7.6"/></g>
<polygon points="765,92 779,92 773,101 759,101" fill="#dcdcdc"/>
<circle cx="778.5" cy="107.5" r="4.5" fill="#5fc8e0"/>
<rect x="776" y="111.5" width="5" height="4" fill="#f0f0f0"/>

<rect x="675.8" y="123.4" width="268" height="34.2" fill="#2c333e"/>
<rect x="677.8" y="125.4" width="264" height="30.2" fill="#4a5467"/>
<polygon points="927,137 939,137 933,143" fill="#e6e6e6"/>
<rect x="675.8" y="161.3" width="268" height="32" fill="#2c333e"/>
<rect x="677.8" y="163.3" width="264" height="28" fill="#4a5467"/>
<polygon points="929,175 941,175 935,181" fill="#e6e6e6"/>
<circle cx="692.5" cy="175" r="7.7" fill="#f4c870"/>
<rect x="688.5" y="181" width="8" height="6.5" rx="2" fill="#f0f0f0"/>
<circle cx="720.3" cy="176.5" r="7" fill="#f4c870"/>
<g stroke="#f4c870" stroke-width="1.2"><path d="M720.3,165 v3 M720.3,185 v3 M709,176.5 h3 M729,176.5 h3 M712.5,168.5 l2,2 M726,182 l2,2 M728,168.5 l-2,2 M714.5,182 l-2,2"/></g>
<rect x="738" y="166" width="20" height="19" fill="#6a7384" stroke="#f0f0f0" stroke-width="1" stroke-dasharray="5 3"/>
<circle cx="754" cy="183" r="4" fill="#f4c870"/>
<rect x="765.6" y="175" width="16" height="13" fill="#f4c870"/>
<path d="M775.5,175 v-5 q0,-4.5 4.5,-4.5 q4.5,0 4.5,4.5 v3" fill="none" stroke="#f4c870" stroke-width="2.2"/>
<line x1="773.6" y1="179" x2="773.6" y2="184" stroke="#222" stroke-width="1.2"/>
<rect x="796" y="166.4" width="21" height="20.4" fill="#000" stroke="#f0f0f0" stroke-width="1.1"/>

<!-- ===== Measure ===== -->
<rect x="981.7" y="109" width="42.9" height="10.5" fill="#f0c868"/>
<path d="M985,109 v4 M989,109 v3 M993,109 v4 M997,109 v3 M1001,109 v4 M1005,109 v3 M1009,109 v4 M1013,109 v3 M1017,109 v4 M1021,109 v3" stroke="#5a4a20" stroke-width="1"/>
<polygon points="998.5,173.6 1006,173.6 1002.2,178" fill="#e6e6e6"/>
<g stroke="#1e1e1e" stroke-width="0.8">
<polygon points="1061,96 1074,96 1079,92 1066,92" fill="#f4f4f4"/>
<rect x="1061" y="96" width="13" height="16" fill="#d8d8d8"/>
<rect x="1071" y="100" width="14" height="16.5" fill="#f4f4f4"/>
</g>
<rect x="1074" y="103" width="8" height="4" fill="#5fb8f0"/>
<path d="M1075,112 h6 M1075,112 l2,-1.5 M1075,112 l2,1.5" stroke="#1e1e1e" stroke-width="0.8" fill="none"/>
<rect x="1061" y="127.5" width="18" height="20" fill="#dcdcdc"/>
<path d="M1064,132 h2 M1068,132 h8 M1064,136 h2 M1068,136 h8 M1064,140 h2 M1068,140 h8 M1064,144 h2 M1068,144 h6" stroke="#333" stroke-width="1"/>
<circle cx="1080" cy="147" r="5.5" fill="#5aaef0" stroke="#3b4453" stroke-width="1"/>
<path d="M1080,145 v5" stroke="#fff" stroke-width="1.2"/>
<path d="M1062,187 v-22 M1062,187 h23" stroke="#e6e6e6" stroke-width="1.2" fill="none"/>
<polygon points="1059,168 1062,163 1065,168" fill="#e6e6e6"/>
<polygon points="1082,184 1086,187 1082,190" fill="#e6e6e6"/>
<circle cx="1074" cy="171.5" r="5.5" fill="none" stroke="#e6e6e6" stroke-width="1.3"/>
<rect x="1072.5" y="170" width="3" height="3" fill="#5fb8f0"/>
<line x1="1078" y1="175.5" x2="1082.5" y2="180" stroke="#e0b078" stroke-width="2"/>

<!-- ===== Object Snap ===== -->
<rect x="1099.4" y="86" width="78.1" height="105.6" fill="#2b313c"/>
<g stroke="#e8dca0" stroke-width="1.1" fill="none">
<line x1="1124" y1="131" x2="1156" y2="99"/>
<rect x="1116" y="130.2" width="9" height="9"/>
<rect x="1155" y="91" width="9" height="9"/>
<line x1="1197.8" y1="137.7" x2="1244.7" y2="90.8"/>
<rect x="1216.7" y="109.8" width="9" height="9" fill="#3b4453"/>
</g>
<g stroke="#e8e8e8" stroke-width="1.1" fill="none">
<circle cx="1280.4" cy="103.3" r="11.5"/>
<path d="M1305,92 l22.5,22.5 M1327.5,92 l-22.5,22.5"/>
<path d="M1341,92 l22.5,22.5 M1363.5,92 l-22.5,22.5"/>
<path d="M1386,97 h19 v9 h-19 z"/>
<circle cx="1401" cy="105" r="5"/>
<rect x="1270.5" y="129.5" width="19.8" height="19.8"/>
<circle cx="1316.3" cy="139.5" r="10"/>
<circle cx="1353" cy="142" r="10"/>
<path d="M1341,146 l15,-15"/>
<path d="M1280.4,166 v15 M1268,181 h25"/>
<path d="M1306,189 l20,-20 M1312,189 l20,-20"/>
<path d="M1342,189 l22,-22"/>
</g>
<g stroke="#e8dca0" stroke-width="1.1" fill="#3b4453">
<rect x="1276.9" y="99.8" width="7" height="7"/>
<rect x="1312.8" y="99.8" width="7" height="7"/>
<rect x="1348.7" y="99.8" width="7" height="7"/>
<rect x="1385" y="101" width="6" height="6"/>
<rect x="1276.9" y="136" width="7" height="7"/>
<rect x="1312.8" y="126" width="7" height="6"/>
<rect x="1312.8" y="147" width="7" height="6"/>
<rect x="1302.3" y="136.5" width="6" height="7"/>
<rect x="1323.3" y="136.5" width="6" height="7"/>
<rect x="1346" y="131" width="7" height="7"/>
<rect x="1391" y="136" width="7" height="7"/>
<rect x="1277" y="177" width="7" height="7"/>
<rect x="1350" y="172" width="7" height="7"/>
<rect x="1358" y="179" width="7" height="7"/>
</g>
<path d="M1384,188 v-12 q0,-7 7,-7 q7,0 7,7 v12" fill="none" stroke="#e6e6e6" stroke-width="4.5"/>
<path d="M1381.8,185 h4.5 M1395.8,185 h4.5" stroke="#ffffff" stroke-width="3"/>
<path d="M1399,164 l6,6 M1405,164 l-6,6" stroke="#ef5b5b" stroke-width="1.8"/>
<rect x="1401" y="181" width="5" height="5" fill="none" stroke="#e8dca0" stroke-width="1"/>

<!-- ===== User Interface ===== -->
<g stroke="#1e1e1e" stroke-width="0.8">
<rect x="1447.5" y="93.5" width="34" height="23" fill="#f0f0f0"/>
<rect x="1461.5" y="110" width="35" height="26" fill="#f0f0f0"/>
</g>
<path d="M1447.5,96 h34 M1461.5,113 h35" stroke="#888" stroke-width="1"/>
<path d="M1484,95.5 h11 v5 M1484,95.5 l3,-2.5 M1484,95.5 l3,2.5" stroke="#e6e6e6" stroke-width="1.1" fill="none"/>
<path d="M1448,127 v5 h9 M1457,132 l-3,-2.5 M1457,132 l-3,2.5" stroke="#e6e6e6" stroke-width="1.1" fill="none"/>
<polygon points="1512.5,165 1520,165 1516.2,169" fill="#e6e6e6"/>
<rect x="1521.6" y="85.6" width="74.2" height="106.8" fill="#435a76" stroke="#5fb4d8" stroke-width="1.2"/>
<rect x="1596.6" y="85.6" width="60.9" height="106.8" fill="#435a76" stroke="#5fb4d8" stroke-width="1.2"/>
<polygon points="1536,115 1553,115 1565,100 1584,100 1584,130 1536,130" fill="#d9d9d9"/>
<polygon points="1540,112 1547,104 1557,104 1551,112" fill="#bdbdbd"/>
<path d="M1570,106 l3,3 M1573,106 l-3,3" stroke="#222" stroke-width="0.9"/>
<polygon points="1605,100 1653,100 1653,130 1633,130 1625,115 1605,115" fill="#d9d9d9"/>
<polygon points="1611,118 1621,118 1627,125 1617,125" fill="#bdbdbd"/>
<g fill="#f0f0f0">
<rect x="1666" y="92" width="24.8" height="9.5"/><rect x="1666" y="105" width="24.8" height="9.8"/>
<rect x="1666" y="127.8" width="11" height="24.2"/><rect x="1679.8" y="127.8" width="11" height="24.2"/>
</g>
<path d="M1666,94 h24.8 M1666,107 h24.8 M1666,130 h11 M1679.8,130 h11" stroke="#9a9a9a" stroke-width="1.5"/>
<g stroke="#1e1e1e" stroke-width="0.8" fill="#f0f0f0">
<rect x="1666.5" y="164" width="14" height="10"/>
<rect x="1671" y="169" width="14.5" height="11"/>
<rect x="1676" y="175.5" width="14.8" height="12.5"/>
</g>
<rect x="1736.5" y="91" width="43" height="39" fill="#e6e6e6" stroke="#1e1e1e" stroke-width="0.8"/>
<path d="M1736.5,98 h43 M1736.5,103 h43 M1746,103 v27" stroke="#555" stroke-width="1"/>
<path d="M1742,93.5 h7 M1751,93.5 h7 M1760,93.5 h7 M1769,93.5 h7 M1739,107 h5 M1739,111 h5 M1739,115 h5 M1739,119 h5 M1739,123 h5" stroke="#777" stroke-width="1.2"/>
<path d="M1763,137 l12,-12" stroke="#5aaef0" stroke-width="3.5"/>
<circle cx="1778" cy="122" r="5" fill="none" stroke="#5aaef0" stroke-width="3"/>
<polygon points="1799,165 1807,165 1803,169" fill="#e6e6e6"/>
<!-- Help -->
<circle cx="1844" cy="114.8" r="24.5" fill="#d9d9d9"/>
<text x="1844" y="128" text-anchor="middle" font-family="Liberation Sans" font-size="36" fill="#333">?</text>
<g fill="#f0f0f0">
<rect x="1883" y="92" width="1.5" height="22"/>
<rect x="1886" y="94" width="14" height="4"/>
<rect x="1886" y="100" width="9" height="4"/>
<rect x="1886" y="106" width="14" height="4"/>
</g>
<circle cx="1890" cy="175.5" r="11" fill="#d9d9d9"/>
<text x="1890" y="182" text-anchor="middle" font-family="Liberation Serif" font-weight="bold" font-size="16" fill="#333">i</text>

<!-- ===== file tab bar ===== -->
<g fill="#f0f0f0"><rect x="25" y="241.2" width="24.5" height="2.8"/><rect x="25" y="248.5" width="24.5" height="2.8"/><rect x="25" y="256" width="24.5" height="2.8"/></g>
<line x1="64.6" y1="262" x2="74.5" y2="238" stroke="#666d78" stroke-width="1"/>
<rect x="161.5" y="249" width="13.5" height="9.5" fill="#e0e0e0"/>
<path d="M164.5,249 v-3 q0,-4 3.7,-4 q3.7,0 3.7,4 v3" fill="none" stroke="#e0e0e0" stroke-width="2"/>
<rect x="167.6" y="252" width="1.4" height="3" fill="#3b4453"/>
<path d="M541.5,245 l11,11 M552.5,245 l-11,11" stroke="#b8bcc4" stroke-width="2.2"/>
<path d="M586,250 h22 M597,239.7 v20.7" stroke="#e8e8e8" stroke-width="2.6"/>
<line x1="623" y1="262" x2="633" y2="238" stroke="#555c67" stroke-width="1"/>

<!-- ===== status bar ===== -->
<g fill="#f0f0f0"><rect x="25" y="986" width="24.5" height="2.8"/><rect x="25" y="993.5" width="24.5" height="2.8"/><rect x="25" y="1001" width="24.5" height="2.8"/></g>
<line x1="64.6" y1="1007" x2="74.5" y2="983" stroke="#666d78" stroke-width="1"/>
<circle cx="1805" cy="999" r="11" fill="none" stroke="#e8eef8" stroke-width="1.4"/>
<path d="M1799,1005 l9,-9" stroke="#e8eef8" stroke-width="1.8"/>
<!-- status icons -->
<rect x="1832" y="983" width="29" height="21" fill="#3a70b8"/>
<path d="M1832,990 h29 M1840,983 v21" stroke="#e8e8e8" stroke-width="1"/>
<rect x="1837.5" y="987.5" width="5" height="5" fill="#3a70b8" stroke="#e8e8e8" stroke-width="1"/>
<polygon points="1832,1003 1846,1003 1849,1012 1832,1012" fill="#f0b429"/>
<path d="M1845,1008 l5,5 l9,-9" stroke="#4cb050" stroke-width="3" fill="none"/>
<rect x="1879" y="988" width="21" height="15" fill="#f0f0f0"/>
<path d="M1879,1003 l7,-11 l9,14" stroke="#333" stroke-width="0.9" fill="none"/>
<rect x="1884.5" y="988.5" width="2" height="2" fill="#3a70b8"/>
<polygon points="1896,998 1903,1011 1889,1011" fill="#f08030"/>
<rect x="1895.5" y="1002" width="1" height="5" fill="#fff"/>
</svg>
<div class="t" style="left:14.4px;top:149px;font-size:18px;transform:scaleX(0.9830);transform-origin:0 0">Open</div>
<div class="t" style="left:80px;top:149px;font-size:18px;transform:scaleX(0.9227);transform-origin:0 0">DWG</div>
<div class="t" style="left:69px;top:174px;font-size:18px;transform:scaleX(0.9836);transform-origin:0 0">Convert</div>
<div class="t" style="left:157.5px;top:149px;font-size:18px;transform:scaleX(0.9829);transform-origin:0 0">Plot</div>
<div class="t" style="left:304px;top:131px;font-size:18px;transform:scaleX(0.9079);transform-origin:0 0">Extents</div>
<div class="t" style="left:475.5px;top:97px;font-size:18px;transform:scaleX(0.9954);transform-origin:0 0">2D Wireframe</div>
<div class="t" style="left:475.5px;top:133px;font-size:18px;transform:scaleX(0.9500);transform-origin:0 0">Unsaved View</div>
<div class="t" style="left:680.6px;top:133px;font-size:18px;transform:scaleX(0.9363);transform-origin:0 0">Unsaved Layer State</div>
<div class="t" style="left:825px;top:170px;font-size:18px">0</div>
<div class="t" style="left:969px;top:149px;font-size:18px;transform:scaleX(0.9539);transform-origin:0 0">Measure</div>
<div class="t" style="left:1104.6px;top:149px;font-size:18px;transform:scaleX(1.0005);transform-origin:0 0">Endpoint</div>
<div class="t" style="left:1185.3px;top:149px;font-size:18px;transform:scaleX(1.0640);transform-origin:0 0">Midpoint</div>
<div class="t" style="left:1449px;top:146px;font-size:18px;transform:scaleX(0.9507);transform-origin:0 0">Switch</div>
<div class="t" style="left:1437.7px;top:171px;font-size:18px;transform:scaleX(0.9955);transform-origin:0 0">Windows</div>
<div class="t" style="left:1528px;top:149px;font-size:18px;transform:scaleX(0.8981);transform-origin:0 0">File Tabs</div>
<div class="t" style="left:1602.3px;top:149px;font-size:18px;transform:scaleX(0.9732);transform-origin:0 0">Layout</div>
<div class="t" style="left:1612.7px;top:174px;font-size:18px;transform:scaleX(0.8493);transform-origin:0 0">Tabs</div>
<div class="t" style="left:1745.5px;top:146px;font-size:18px;transform:scaleX(0.9259);transform-origin:0 0">User</div>
<div class="t" style="left:1730px;top:171px;font-size:18px;transform:scaleX(0.9565);transform-origin:0 0">Interface</div>
<div class="t" style="left:1825.7px;top:149px;font-size:18px;transform:scaleX(0.9641);transform-origin:0 0">Help</div>

</body></html>
